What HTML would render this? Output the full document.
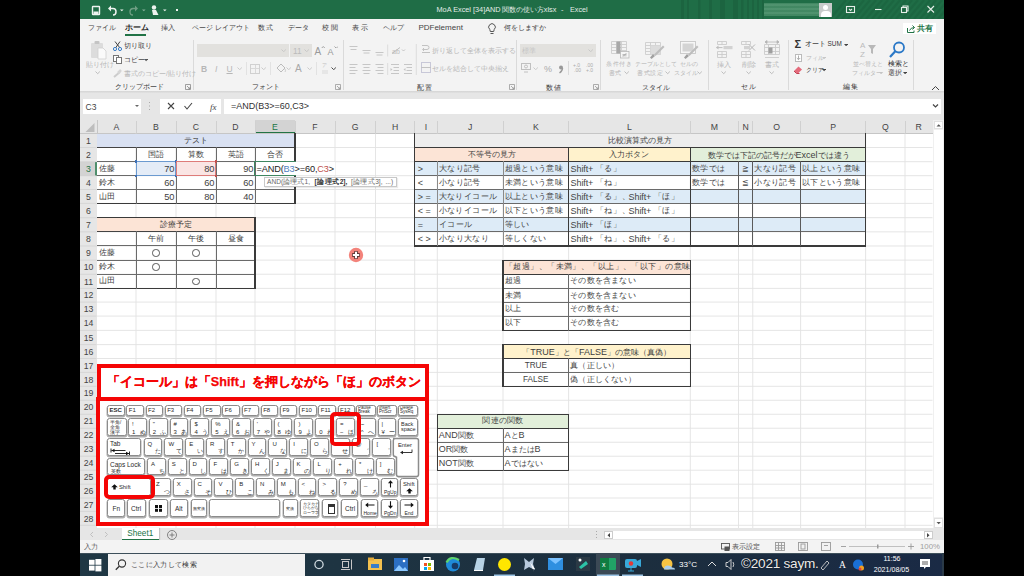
<!DOCTYPE html>
<html><head><meta charset="utf-8"><style>
html,body{margin:0;padding:0}
body{width:1024px;height:576px;position:relative;overflow:hidden;background:#000;font-family:"Liberation Sans",sans-serif}
div{position:absolute;box-sizing:border-box}
.t{white-space:nowrap}
.j{text-align:justify;text-align-last:justify;white-space:nowrap}
.k{background:#fff;border:1.5px solid #8c8c8c;border-radius:2.5px;box-shadow:0 1px 0 0.5px #b0b0b0;font-size:6px;color:#2a2a2a;overflow:hidden}
.k span{position:absolute;white-space:nowrap;line-height:6px}
</style></head><body>
<div style="left:80.00px;top:0.00px;width:864.00px;height:19.00px;background:#1f6d46"></div>
<svg style="position:absolute;left:680px;top:0" width="264" height="19"><g fill="#1a5e3c" opacity="0.55"><rect x="1" y="0" width="3" height="19"/><rect x="7" y="0" width="2" height="19"/><rect x="18" y="0" width="2.5" height="19"/><rect x="29" y="0" width="3" height="19"/><rect x="40" y="0" width="5" height="19"/><rect x="53" y="0" width="5" height="19"/><rect x="61" y="0" width="2.5" height="19"/><rect x="67" y="0" width="2" height="19"/><rect x="72" y="0" width="2" height="19"/><rect x="77" y="0" width="2" height="19"/><rect x="82" y="0" width="2" height="19"/></g><g stroke="#1a603d" stroke-width="2" opacity="0.5"><line x1="150" y1="19" x2="166" y2="0"/><line x1="156" y1="19" x2="172" y2="0"/><line x1="162" y1="19" x2="178" y2="0"/><line x1="168" y1="19" x2="184" y2="0"/><line x1="174" y1="19" x2="190" y2="0"/><line x1="180" y1="19" x2="196" y2="0"/><line x1="186" y1="19" x2="202" y2="0"/><line x1="192" y1="19" x2="208" y2="0"/><line x1="198" y1="19" x2="214" y2="0"/><line x1="204" y1="19" x2="220" y2="0"/><line x1="210" y1="19" x2="226" y2="0"/><line x1="216" y1="19" x2="232" y2="0"/><line x1="222" y1="19" x2="238" y2="0"/><line x1="228" y1="19" x2="244" y2="0"/><line x1="234" y1="19" x2="250" y2="0"/><line x1="240" y1="19" x2="256" y2="0"/><line x1="246" y1="19" x2="262" y2="0"/><line x1="252" y1="19" x2="268" y2="0"/><line x1="258" y1="19" x2="274" y2="0"/><line x1="264" y1="19" x2="280" y2="0"/></g></svg>
<svg style="position:absolute;left:88px;top:3px" width="100" height="14">
<g fill="none" stroke="#eef3ef" stroke-width="1.4">
<rect x="4.5" y="3.5" width="7" height="8" rx="0.5"/></g><rect x="5.5" y="8.5" width="5" height="3" fill="#eef3ef"/>
<g fill="none" stroke="#eef3ef" stroke-width="1.5"><path d="M22 5.5 h3 q3 0 3 3.2 q0 3.3 -3 3.3"/></g><path d="M20 5.5 l3 -3 v6z" fill="#eef3ef"/>
<g fill="none" stroke="#6f9e83" stroke-width="1.3"><path d="M48 5.5 h-3 q-3 0 -3 3.2 q0 3.3 3 3.3"/></g><path d="M50 5.5 l-3 -3 v6z" fill="#6f9e83"/>
<g fill="#eef3ef"><path d="M32 6.5 l1.8 1.8 l1.8 -1.8z"/><path d="M54 6.5 l1.8 1.8 l1.8 -1.8z" opacity=".5"/>
<circle cx="66" cy="4.5" r="2.2"/><path d="M64 7 h4 l2.5 5 h-5.5z"/><path d="M75 6.5 l1.8 1.8 l1.8 -1.8z"/><rect x="88" y="6" width="2" height="2"/></g>
</svg>
<div class="t" style="left:436.50px;top:-0.50px;line-height:20px;font-size:7.3px;color:#e4ece7;">MoA Excel [34]AND</div>
<div class="t j" style="left:501.50px;width:40.00px;top:-0.50px;line-height:20px;font-size:6.6px;color:#e4ece7;">関数の使い方</div>
<div class="t" style="left:541.80px;top:-0.50px;line-height:20px;font-size:7.3px;color:#e4ece7;">.xlsx</div>
<div class="t" style="left:561.00px;top:-0.50px;line-height:20px;font-size:7.3px;color:#e4ece7;">-</div>
<div class="t" style="left:570.00px;top:-0.50px;line-height:20px;font-size:7.2px;color:#e4ece7;">Excel</div>
<div style="left:764.00px;top:3.00px;width:55.00px;height:13.00px;background:repeating-linear-gradient(180deg,#3f8660 0px,#5c9c79 2px,#3f8660 4px);opacity:.9"></div>
<div style="left:819.00px;top:3.00px;width:13.00px;height:13.50px;background:#c9cccb;overflow:hidden"><div style="left:4px;top:2px;width:5px;height:5px;border-radius:50%;background:#fff"></div><div style="left:1.5px;top:8px;width:10px;height:7px;border-radius:4px 4px 0 0;background:#fff"></div></div>
<svg style="position:absolute;left:840px;top:0" width="104" height="19"><g fill="none" stroke="#e6eee9" stroke-width="1.1">
<rect x="6.5" y="6.5" width="8" height="6"/><path d="M9 9 l1.5 1.5 l1.5 -1.5"/>
<line x1="35" y1="9.5" x2="41.5" y2="9.5"/>
<rect x="61.5" y="7.5" width="5" height="5"/><path d="M63 7.5 v-1.5 h5 v5 h-1.5"/>
<path d="M87.5 6 l6.5 6.5 M94 6 l-6.5 6.5"/></g></svg>
<div style="left:80.00px;top:19.00px;width:864.00px;height:73.00px;background:#f3f3f3"></div>
<div class="t j" style="left:88.00px;width:21.00px;top:18.30px;line-height:20px;font-size:7.3px;color:#444;">ファイル</div>
<div class="t j" style="left:160.70px;width:14.30px;top:18.30px;line-height:20px;font-size:7.3px;color:#444;">挿入</div>
<div class="t j" style="left:191.70px;width:50.00px;top:18.30px;line-height:20px;font-size:7.3px;color:#444;">ページ レイアウト</div>
<div class="t j" style="left:257.70px;width:15.30px;top:18.30px;line-height:20px;font-size:7.3px;color:#444;">数式</div>
<div class="t j" style="left:288.00px;width:19.00px;top:18.30px;line-height:20px;font-size:7.3px;color:#444;">データ</div>
<div class="t j" style="left:322.00px;width:15.50px;top:18.30px;line-height:20px;font-size:7.3px;color:#444;">校閲</div>
<div class="t j" style="left:352.00px;width:16.00px;top:18.30px;line-height:20px;font-size:7.3px;color:#444;">表示</div>
<div class="t j" style="left:382.50px;width:18.50px;top:18.30px;line-height:20px;font-size:7.3px;color:#444;">ヘルプ</div>
<div class="t j" style="left:125.00px;width:20.40px;top:18.30px;line-height:20px;font-size:7.5px;color:#222;font-weight:bold">ホーム</div>
<div class="t" style="left:418.40px;top:18.30px;line-height:20px;font-size:8px;color:#444;">PDFelement</div>
<div style="left:125.00px;top:34.00px;width:21.00px;height:2.00px;background:#217346"></div>
<svg style="position:absolute;left:486px;top:22px" width="12" height="13"><g fill="none" stroke="#555" stroke-width="1"><path d="M3.8 7.5 a3.3 3.3 0 1 1 4.4 0 l-.5 2 h-3.4z"/><line x1="4.5" y1="11.5" x2="7.5" y2="11.5"/></g></svg>
<div class="t j" style="left:503.75px;width:37.25px;top:18.30px;line-height:20px;font-size:7.3px;color:#444;">何をしますか</div>
<div style="left:903.00px;top:23.00px;width:33.00px;height:11.00px;background:#fff"></div>
<svg style="position:absolute;left:906px;top:24px" width="10" height="10"><g fill="none" stroke="#217346" stroke-width="1"><path d="M1.5 4 v4.5 h6.5 v-2"/><path d="M3.5 6.5 q1 -3 5 -3 M6.5 1.5 l2 2 l-2 2"/></g></svg>
<div class="t j" style="left:917.00px;width:16.00px;top:18.50px;line-height:20px;font-size:7.5px;color:#217346;font-weight:bold">共有</div>
<div style="left:192.50px;top:40.00px;width:1.00px;height:50.00px;background:#dadada"></div>
<div style="left:342.50px;top:40.00px;width:1.00px;height:50.00px;background:#dadada"></div>
<div style="left:516.00px;top:40.00px;width:1.00px;height:50.00px;background:#dadada"></div>
<div style="left:600.00px;top:40.00px;width:1.00px;height:50.00px;background:#dadada"></div>
<div style="left:708.00px;top:40.00px;width:1.00px;height:50.00px;background:#dadada"></div>
<div style="left:788.00px;top:40.00px;width:1.00px;height:50.00px;background:#dadada"></div>
<div style="left:913.00px;top:40.00px;width:1.00px;height:50.00px;background:#dadada"></div>
<svg style="position:absolute;left:88px;top:40px" width="24" height="20">
<rect x="3" y="3" width="12" height="15" rx="1" fill="#dcdcdc"/><rect x="6.5" y="1" width="5" height="3" rx="1" fill="#c4c4c4"/>
<path d="M10 8 h5 l3 3 v8 h-8z" fill="#fafafa" stroke="#cfcfcf" stroke-width=".8"/></svg>
<div class="t j" style="left:86.00px;width:23.00px;top:54.70px;line-height:20px;font-size:6.5px;color:#b7b7b7;">貼り付け</div>
<svg style="position:absolute;left:95.30px;top:71.40px" width="5.4" height="3.2"><path d="M0.5 0.5 L2.7 2.7 L4.9 0.5" fill="none" stroke="#b7b7b7" stroke-width="0.9"/></svg>
<svg style="position:absolute;left:112px;top:40px" width="12" height="40"><g fill="none" stroke-width="1">
<path d="M3 1.5 l5 6.5 M8 1.5 l-4.5 6.5" stroke="#444"/><circle cx="3" cy="9" r="1.6" stroke="#3b7ec6"/><circle cx="8" cy="9" r="1.6" stroke="#3b7ec6"/>
<rect x="1.5" y="15.5" width="5" height="6" stroke="#777" fill="#fff"/><rect x="4.5" y="17.5" width="5" height="6" stroke="#777" fill="#fff"/>
<path d="M2 37 l6 -5" stroke="#cccccc" stroke-width="2"/><path d="M6 33 l3 -3" stroke="#d5d5d5" stroke-width="2.5"/></g></svg>
<div class="t j" style="left:124.00px;width:21.60px;top:36.00px;line-height:20px;font-size:6.5px;color:#3c3c3c;">切り取り</div>
<div class="t j" style="left:124.00px;width:15.00px;top:50.00px;line-height:20px;font-size:6.5px;color:#3c3c3c;">コピー</div>
<svg style="position:absolute;left:143.90px;top:59.34px" width="4.2" height="2.3"><path d="M0 0 L2.1 2.3100000000000005 L4.2 0z" fill="#555"/></svg>
<div class="t j" style="left:124.00px;width:60.60px;top:64.00px;line-height:20px;font-size:6.5px;color:#b7b7b7;">書式のコピー/貼り付け</div>
<div class="t j" style="left:114.60px;width:34.00px;top:77.00px;line-height:20px;font-size:7px;color:#3a3a3a;">クリップボード</div>
<svg style="position:absolute;left:185px;top:84px" width="6" height="6"><path d="M.5 .5 h5 v5 h-5z M2 2 l3 3 M3 5 h2 v-2" fill="none" stroke="#888" stroke-width=".8"/></svg>
<div style="left:197.00px;top:44.00px;width:92.00px;height:13.00px;background:#e2e1de"></div>
<div style="left:290.00px;top:44.00px;width:22.00px;height:13.00px;background:#e2e1de"></div>
<div class="t" style="left:293.00px;top:40.50px;line-height:20px;font-size:8.3px;color:#bbbbbb;">11</div>
<svg style="position:absolute;left:281.30px;top:48.90px" width="5.4" height="3.2"><path d="M0.5 0.5 L2.7 2.7 L4.9 0.5" fill="none" stroke="#c4c4c4" stroke-width="0.9"/></svg>
<svg style="position:absolute;left:304.30px;top:48.90px" width="5.4" height="3.2"><path d="M0.5 0.5 L2.7 2.7 L4.9 0.5" fill="none" stroke="#c4c4c4" stroke-width="0.9"/></svg>
<div class="t" style="left:314.50px;top:41.50px;line-height:20px;font-size:10px;color:#999;">A</div>
<svg style="position:absolute;left:320.75px;top:45.62px" width="4.5" height="2.8"><path d="M0.5 2.25 L2.25 0.5 L4.0 2.25" fill="none" stroke="#999" stroke-width="0.9"/></svg>
<div class="t" style="left:327.50px;top:42.00px;line-height:20px;font-size:9px;color:#999;">A</div>
<svg style="position:absolute;left:333.75px;top:45.62px" width="4.5" height="2.8"><path d="M0.5 0.5 L2.25 2.25 L4.0 0.5" fill="none" stroke="#999" stroke-width="0.9"/></svg>
<div class="t" style="left:201.00px;top:58.50px;line-height:20px;font-size:8.5px;color:#b7b7b7;font-weight:bold">B</div>
<div class="t" style="left:215.00px;top:58.50px;line-height:20px;font-size:8.5px;color:#b7b7b7;font-style:italic">I</div>
<div class="t" style="left:226.50px;top:58.50px;line-height:20px;font-size:8.5px;color:#b7b7b7;text-decoration:underline">U</div>
<svg style="position:absolute;left:236.80px;top:66.90px" width="5.4" height="3.2"><path d="M0.5 0.5 L2.7 2.7 L4.9 0.5" fill="none" stroke="#c4c4c4" stroke-width="0.9"/></svg>
<div style="left:246.00px;top:62.00px;width:1.00px;height:13.00px;background:#e2e2e2"></div>
<div style="left:250.00px;top:63.50px;width:10.00px;height:10.00px;border:1px solid #d0d0d0;background:linear-gradient(#d8d8d8,#d8d8d8) center/1px 100% no-repeat,linear-gradient(#d8d8d8,#d8d8d8) center/100% 1px no-repeat"></div>
<svg style="position:absolute;left:261.30px;top:66.90px" width="5.4" height="3.2"><path d="M0.5 0.5 L2.7 2.7 L4.9 0.5" fill="none" stroke="#c4c4c4" stroke-width="0.9"/></svg>
<div style="left:270.00px;top:62.00px;width:1.00px;height:13.00px;background:#e2e2e2"></div>
<svg style="position:absolute;left:275px;top:63px" width="12" height="11"><path d="M2 5 l4 -4 l4 4 l-4 4z" fill="none" stroke="#bbb"/><path d="M10 6 q1 2 0 3" stroke="#ccc" fill="none"/></svg>
<svg style="position:absolute;left:285.80px;top:66.90px" width="5.4" height="3.2"><path d="M0.5 0.5 L2.7 2.7 L4.9 0.5" fill="none" stroke="#c4c4c4" stroke-width="0.9"/></svg>
<div class="t" style="left:295.00px;top:58.50px;line-height:20px;font-size:10px;color:#a8a8a8;">A</div>
<svg style="position:absolute;left:306.80px;top:66.90px" width="5.4" height="3.2"><path d="M0.5 0.5 L2.7 2.7 L4.9 0.5" fill="none" stroke="#c4c4c4" stroke-width="0.9"/></svg>
<div style="left:316.00px;top:62.00px;width:1.00px;height:13.00px;background:#e2e2e2"></div>
<div class="t" style="left:322.00px;top:56.00px;line-height:20px;font-size:4.5px;color:#c2c2c2;">ア</div>
<div style="left:322.00px;top:70.00px;width:6.00px;height:4.00px;background:#e6e6e6"></div>
<svg style="position:absolute;left:330.80px;top:66.90px" width="5.4" height="3.2"><path d="M0.5 0.5 L2.7 2.7 L4.9 0.5" fill="none" stroke="#333" stroke-width="0.9"/></svg>
<div class="t j" style="left:251.50px;width:21.50px;top:77.00px;line-height:20px;font-size:7px;color:#3a3a3a;">フォント</div>
<svg style="position:absolute;left:335px;top:84px" width="6" height="6"><path d="M.5 .5 h5 v5 h-5z M2 2 l3 3 M3 5 h2 v-2" fill="none" stroke="#999" stroke-width=".8"/></svg>
<svg style="position:absolute;left:346px;top:44px" width="90" height="34"><g stroke="#c6c6c6" stroke-width="1">
<path d="M3.5 2.5h8M4.5 5.5h6 M16.5 6.5h8M17.5 9h6 M29.5 8.5h8M30.5 11h6"/>
<path d="M3.5 20.5h8M3.5 23.5h6M3.5 26.5h8M3.5 29.5h6 M16.5 20.5h8M17.5 23.5h6M16.5 26.5h8M17.5 29.5h6 M29.5 20.5h8M31.5 23.5h6M29.5 26.5h8M31.5 29.5h6"/>
<path d="M45 20.5h8M47.5 23.5h5.5M47.5 26.5h5.5M45 29.5h8 M58 20.5h8M60.5 23.5h5.5M60.5 26.5h5.5M58 29.5h8"/>
<path d="M44.5 24 l2 1.5 l-2 1.5z M57.5 25.5 l2 -1.5 v3z" fill="#c6c6c6" stroke="none"/>
</g><g stroke="#dcdcdc"><line x1="41.7" y1="0.5" x2="41.7" y2="12.5"/><line x1="41.7" y1="19" x2="41.7" y2="31"/><line x1="70.3" y1="0" x2="70.3" y2="31"/></g>
<path d="M46 9.5 l8 -6" stroke="#bdbdbd"/><text x="46" y="10" font-size="7" fill="#bdbdbd" font-family="Liberation Sans">ab</text><path d="M56 5.5 l1.5 1.5 l1.5 -1.5" fill="none" stroke="#bdbdbd" stroke-width=".9"/></svg>
<svg style="position:absolute;left:420px;top:43px" width="12" height="34"><g fill="none" stroke="#c2c2c2" stroke-width="1">
<path d="M2 2.5 h5 a2 2 0 0 1 0 4 h-4 M2 9.5 h8 M4 5 l-1.5 1.5 l1.5 1.5"/><rect x="1.5" y="19.5" width="9" height="10" stroke="#c8c8d8"/><line x1="1" y1="24.5" x2="11" y2="24.5"/></g></svg>
<div class="t j" style="left:432.00px;width:72.50px;top:40.60px;line-height:20px;font-size:6.5px;color:#b7b7b7;">折り返して全体を表示する</div>
<div class="t j" style="left:432.00px;width:62.00px;top:58.70px;line-height:20px;font-size:6.5px;color:#b7b7b7;">セルを結合して中央揃え</div>
<svg style="position:absolute;left:502.30px;top:67.10px" width="5.4" height="3.2"><path d="M0.5 0.5 L2.7 2.7 L4.9 0.5" fill="none" stroke="#c4c4c4" stroke-width="0.9"/></svg>
<div class="t j" style="left:416.50px;width:15.00px;top:77.60px;line-height:20px;font-size:7.2px;color:#3a3a3a;">配置</div>
<svg style="position:absolute;left:509px;top:84px" width="6" height="6"><path d="M.5 .5 h5 v5 h-5z M2 2 l3 3 M3 5 h2 v-2" fill="none" stroke="#999" stroke-width=".8"/></svg>
<div style="left:520.00px;top:44.00px;width:76.00px;height:13.00px;background:#e2e1de"></div>
<div class="t j" style="left:522.00px;width:13.00px;top:40.50px;line-height:20px;font-size:6.5px;color:#c4c4c4;">標準</div>
<svg style="position:absolute;left:588.30px;top:48.90px" width="5.4" height="3.2"><path d="M0.5 0.5 L2.7 2.7 L4.9 0.5" fill="none" stroke="#c4c4c4" stroke-width="0.9"/></svg>
<svg style="position:absolute;left:520px;top:61px" width="80" height="15"><g fill="none" stroke="#c0c0c0" stroke-width="1">
<rect x="1.5" y="2.5" width="9" height="6"/><line x1="4" y1="11" x2="8" y2="11"/><circle cx="6" cy="5.5" r="1.5"/></g>
<line x1="48.5" y1="0" x2="48.5" y2="14" stroke="#dadada"/></svg>
<svg style="position:absolute;left:533.30px;top:66.90px" width="5.4" height="3.2"><path d="M0.5 0.5 L2.7 2.7 L4.9 0.5" fill="none" stroke="#c4c4c4" stroke-width="0.9"/></svg>
<div class="t" style="left:544.00px;top:58.50px;line-height:20px;font-size:9px;color:#aaa;">%</div>
<svg style="position:absolute;left:557px;top:64px" width="8" height="10"><circle cx="4" cy="3.5" r="2" fill="#999"/><path d="M5.5 4 q0 3 -3 5" stroke="#999" stroke-width="1.4" fill="none"/></svg>
<svg style="position:absolute;left:572px;top:62px" width="26" height="12"><g font-family="Liberation Sans" font-size="5" fill="#aaa"><text x="1" y="5">+.0</text><text x="2" y="10">.00</text><text x="14" y="5">.00</text><text x="14" y="10">+.0</text></g></svg>
<div class="t j" style="left:545.50px;width:15.00px;top:77.60px;line-height:20px;font-size:7.2px;color:#3a3a3a;">数値</div>
<svg style="position:absolute;left:593px;top:84px" width="6" height="6"><path d="M.5 .5 h5 v5 h-5z M2 2 l3 3 M3 5 h2 v-2" fill="none" stroke="#999" stroke-width=".8"/></svg>
<svg style="position:absolute;left:600px;top:36px" width="110" height="24">
<g fill="none" stroke="#cdcdcd" stroke-width="0.9"><path d="M11.5 5.5h15v12h-15z M11.5 8.5h15 M11.5 11.5h15 M11.5 14.5h15 M16.5 5.5v12 M21.5 5.5v12"/></g>
<rect x="16.5" y="5.5" width="4" height="12" fill="#a8a8a8"/><rect x="20.5" y="15.5" width="8.5" height="6.5" fill="#f6f6f6" stroke="#b8b8b8" stroke-width="0.8"/><path d="M23 20.5 l3.5 -3.5 M22.5 18.5 h4 M22.5 19.8 h4" stroke="#999" stroke-width="0.6"/>
<g fill="none" stroke="#cdcdcd" stroke-width="0.9"><path d="M45.5 6.5h15v12h-15z M45.5 9.5h15 M45.5 12.5h15 M45.5 15.5h15 M50.5 6.5v12 M55.5 6.5v12"/></g><rect x="50.5" y="9.5" width="10" height="9" fill="#dcdcdc"/>
<path d="M50 21.5 l3 -3.5 l2 2 l-3.5 3z" fill="#a0a0a0"/><path d="M54 18.5 l9 -9 l1.5 1.5 l-9 9z" fill="#bdbdbd"/>
<rect x="80.5" y="5.5" width="15" height="12" fill="#f6f6f6" stroke="#c8c8c8" stroke-width="0.9"/><rect x="82.5" y="7.5" width="11" height="8" fill="#d4d4d4"/>
<path d="M84 21.5 l3 -3.5 l2 2 l-3.5 3z" fill="#a0a0a0"/><path d="M88 18.5 l9 -9 l1.5 1.5 l-9 9z" fill="#bdbdbd"/></svg>
<div class="t j" style="left:606.00px;width:26.00px;top:54.00px;line-height:20px;font-size:6.3px;color:#b7b7b7;">条件付き</div>
<div class="t j" style="left:609.00px;width:12.00px;top:63.00px;line-height:20px;font-size:6.3px;color:#b7b7b7;">書式</div>
<svg style="position:absolute;left:623.80px;top:71.40px" width="5.4" height="3.2"><path d="M0.5 0.5 L2.7 2.7 L4.9 0.5" fill="none" stroke="#b7b7b7" stroke-width="0.9"/></svg>
<div class="t j" style="left:635.00px;width:36.00px;top:54.00px;line-height:20px;font-size:6.3px;color:#b7b7b7;">テーブルとして</div>
<div class="t j" style="left:637.00px;width:26.00px;top:63.00px;line-height:20px;font-size:6.3px;color:#b7b7b7;">書式設定</div>
<svg style="position:absolute;left:665.30px;top:71.40px" width="5.4" height="3.2"><path d="M0.5 0.5 L2.7 2.7 L4.9 0.5" fill="none" stroke="#b7b7b7" stroke-width="0.9"/></svg>
<div class="t j" style="left:680.00px;width:17.00px;top:54.00px;line-height:20px;font-size:6.3px;color:#b7b7b7;">セルの</div>
<div class="t j" style="left:674.00px;width:20.00px;top:63.00px;line-height:20px;font-size:6.3px;color:#b7b7b7;">スタイル</div>
<svg style="position:absolute;left:696.80px;top:71.40px" width="5.4" height="3.2"><path d="M0.5 0.5 L2.7 2.7 L4.9 0.5" fill="none" stroke="#b7b7b7" stroke-width="0.9"/></svg>
<div class="t j" style="left:642.00px;width:22.00px;top:77.60px;line-height:20px;font-size:7px;color:#3a3a3a;">スタイル</div>
<svg style="position:absolute;left:708px;top:36px" width="80" height="24">
<g fill="none" stroke="#cbcbcb" stroke-width="0.9">
<path d="M9.5 5.5h9v3h-9z M14 5.5v3 M9.5 15.5h9v6h-9z M9.5 18.5h9 M14 15.5v6"/>
<path d="M33.5 5.5h9v3h-9z M38 5.5v3 M33.5 15.5h9v6h-9z M33.5 18.5h9 M38 15.5v6"/>
<path d="M56.5 8.5h15v10h-15z M56.5 11.5h15 M56.5 15.5h15 M60.5 8.5v10 M67.5 8.5v10 M57 21.5 h14"/>
</g>
<rect x="15.5" y="10" width="9" height="3.2" fill="#d2d2d2"/><path d="M8.5 11.6 h6" stroke="#bdbdbd" stroke-width="1"/><path d="M8 11.6 l2.5 -2 v4z" fill="#bdbdbd"/>
<rect x="36" y="10" width="6" height="3.2" fill="#d2d2d2"/><path d="M41 8.5 l6 6 M47 8.5 l-6 6" stroke="#b5b5b5" stroke-width="1"/>
<rect x="60.5" y="11.5" width="4" height="6" fill="#9e9e9e"/><path d="M57 6 h14 M57 6 l2 -1.5 v3z M71 6 l-2 -1.5 v3z" stroke="#b5b5b5" stroke-width="0.8" fill="#b5b5b5"/>
</svg>
<div class="t j" style="left:717.00px;width:14.00px;top:54.50px;line-height:20px;font-size:6.8px;color:#b7b7b7;">挿入</div>
<svg style="position:absolute;left:721.30px;top:71.40px" width="5.4" height="3.2"><path d="M0.5 0.5 L2.7 2.7 L4.9 0.5" fill="none" stroke="#b7b7b7" stroke-width="0.9"/></svg>
<div class="t j" style="left:742.00px;width:14.00px;top:54.50px;line-height:20px;font-size:6.8px;color:#b7b7b7;">削除</div>
<svg style="position:absolute;left:746.30px;top:71.40px" width="5.4" height="3.2"><path d="M0.5 0.5 L2.7 2.7 L4.9 0.5" fill="none" stroke="#b7b7b7" stroke-width="0.9"/></svg>
<div class="t j" style="left:765.00px;width:14.00px;top:54.50px;line-height:20px;font-size:6.8px;color:#b7b7b7;">書式</div>
<svg style="position:absolute;left:769.30px;top:71.40px" width="5.4" height="3.2"><path d="M0.5 0.5 L2.7 2.7 L4.9 0.5" fill="none" stroke="#b7b7b7" stroke-width="0.9"/></svg>
<div class="t j" style="left:740.50px;width:15.00px;top:77.00px;line-height:20px;font-size:7.2px;color:#3a3a3a;">セル</div>
<div class="t" style="left:794.50px;top:34.20px;line-height:20px;font-size:11px;color:#333;font-weight:bold">Σ</div>
<div class="t j" style="left:805.00px;width:21.00px;top:34.20px;line-height:20px;font-size:6.5px;color:#333;">オート</div>
<div class="t" style="left:827.50px;top:34.20px;line-height:20px;font-size:6.4px;color:#333;">SUM</div>
<svg style="position:absolute;left:843.70px;top:43.74px" width="4.2" height="2.3"><path d="M0 0 L2.1 2.3100000000000005 L4.2 0z" fill="#444"/></svg>
<div style="left:795.00px;top:54.00px;width:7.00px;height:8.00px;border:1px solid #bbb;background:#fff"></div>
<svg style="position:absolute;left:795px;top:54px" width="7" height="8"><path d="M3.5 1.5 v4 M1.8 4 l1.7 1.7 l1.7 -1.7" fill="none" stroke="#999" stroke-width=".8"/></svg>
<div class="t j" style="left:806.00px;width:13.00px;top:48.00px;line-height:20px;font-size:6.3px;color:#b7b7b7;">フィル</div>
<svg style="position:absolute;left:821.60px;top:57.14px" width="4.2" height="2.3"><path d="M0 0 L2.1 2.3100000000000005 L4.2 0z" fill="#c8c8c8"/></svg>
<svg style="position:absolute;left:793px;top:65px" width="10" height="10"><path d="M1 6 l4.5 -4.5 l3.5 3 l-4.5 4.5z" fill="#e46a7b"/><path d="M1 6 l2.5 2.5 h3" stroke="#c04052" fill="none"/></svg>
<div class="t j" style="left:806.00px;width:13.00px;top:60.40px;line-height:20px;font-size:6.3px;color:#333;">クリア</div>
<svg style="position:absolute;left:821.60px;top:69.44px" width="4.2" height="2.3"><path d="M0 0 L2.1 2.3100000000000005 L4.2 0z" fill="#444"/></svg>
<svg style="position:absolute;left:858px;top:40px" width="50" height="20"><g font-family="Liberation Sans" font-size="8" fill="#bbb"><text x="2" y="8">A</text><text x="2" y="17">Z</text></g>
<path d="M10 5 h8 l-3 4 v5 l-2 -1 v-4z" fill="#b8b8b8"/>
<circle cx="41" cy="7.5" r="5" fill="none" stroke="#2a78c7" stroke-width="1.8"/><line x1="37.3" y1="11.3" x2="32" y2="17" stroke="#2a78c7" stroke-width="2.2"/></svg>
<div class="t j" style="left:853.00px;width:29.70px;top:54.00px;line-height:20px;font-size:6.3px;color:#b7b7b7;">並べ替えと</div>
<div class="t j" style="left:852.00px;width:25.00px;top:63.00px;line-height:20px;font-size:6.3px;color:#b7b7b7;">フィルター</div>
<svg style="position:absolute;left:879.40px;top:72.14px" width="4.2" height="2.3"><path d="M0 0 L2.1 2.3100000000000005 L4.2 0z" fill="#c4c4c4"/></svg>
<div class="t j" style="left:888.00px;width:18.00px;top:54.00px;line-height:20px;font-size:6.5px;color:#333;">検索と</div>
<div class="t j" style="left:888.00px;width:12.00px;top:63.00px;line-height:20px;font-size:6.5px;color:#333;">選択</div>
<svg style="position:absolute;left:902.70px;top:72.14px" width="4.2" height="2.3"><path d="M0 0 L2.1 2.3100000000000005 L4.2 0z" fill="#444"/></svg>
<div class="t j" style="left:842.50px;width:15.00px;top:77.00px;line-height:20px;font-size:7.2px;color:#3a3a3a;">編集</div>
<svg style="position:absolute;left:931px;top:85px" width="9" height="6"><path d="M1 5 l3.5 -3.5 l3.5 3.5" fill="none" stroke="#444" stroke-width="1"/></svg>
<div style="left:80.00px;top:91.00px;width:864.00px;height:2.00px;background:linear-gradient(#d4d4d4,#e2e2e2)"></div>
<div style="left:80.00px;top:93.00px;width:864.00px;height:27.00px;background:#e6e6e6"></div>
<div style="left:83.00px;top:99.00px;width:58.00px;height:14.50px;background:#fff"></div>
<div class="t" style="left:85.50px;top:96.50px;line-height:20px;font-size:8.5px;color:#444;">C3</div>
<svg style="position:absolute;left:134px;top:104px" width="6" height="4"><path d="M1 1 l2 2 l2 -2z" fill="#666"/></svg>
<svg style="position:absolute;left:148px;top:101px" width="4" height="10"><g fill="#aaa"><rect x="1" y="1" width="1" height="1"/><rect x="1" y="4.5" width="1" height="1"/><rect x="1" y="8" width="1" height="1"/></g></svg>
<div style="left:160.00px;top:99.00px;width:61.00px;height:14.50px;background:#fff"></div>
<svg style="position:absolute;left:160px;top:99px" width="61" height="14"><g stroke="#444" stroke-width="1.1" fill="none"><path d="M8 4 l6 6 M14 4 l-6 6"/><path d="M24.5 7 l2.5 3 l5 -6"/></g></svg>
<div class="t" style="left:210.00px;top:96.50px;line-height:20px;font-size:9px;color:#444;font-style:italic;font-family:'Liberation Serif'">fx</div>
<div style="left:224.00px;top:99.00px;width:717.00px;height:14.50px;background:#fff"></div>
<div class="t" style="left:231.00px;top:96.20px;line-height:20px;font-size:9px;color:#333;">=AND(B3&gt;=60,C3&gt;</div>
<svg style="position:absolute;left:932px;top:103px" width="7" height="6"><path d="M1 1.5 l2.5 2.5 l2.5 -2.5" fill="none" stroke="#444" stroke-width="1.2"/></svg>
<div style="left:80.00px;top:120.00px;width:853.00px;height:13.60px;background:#e6e6e6"></div>
<div style="left:80.00px;top:133.60px;width:17.00px;height:395.00px;background:#e6e6e6"></div>
<div style="left:255.00px;top:120.00px;width:40.00px;height:13.60px;background:#d3d3d3"></div>
<div style="left:255.00px;top:131.80px;width:40.00px;height:1.80px;background:#217346"></div>
<div style="left:80.00px;top:161.60px;width:17.00px;height:14.00px;background:#d3d3d3"></div>
<div style="left:95.20px;top:161.60px;width:1.80px;height:14.00px;background:#4f8f6c"></div>
<svg style="position:absolute;left:84px;top:122px" width="12" height="11"><path d="M10.5 1 v9 h-9z" fill="#bdbdbd"/></svg>
<div class="t" style="left:-33.50px;width:300px;text-align:center;top:117.00px;line-height:20px;font-size:8.7px;color:#444;">A</div>
<div style="left:135.50px;top:121.00px;width:1.00px;height:12.40px;background:#d0d0d0"></div>
<div class="t" style="left:6.00px;width:300px;text-align:center;top:117.00px;line-height:20px;font-size:8.7px;color:#444;">B</div>
<div style="left:175.50px;top:121.00px;width:1.00px;height:12.40px;background:#d0d0d0"></div>
<div class="t" style="left:46.00px;width:300px;text-align:center;top:117.00px;line-height:20px;font-size:8.7px;color:#444;">C</div>
<div style="left:215.50px;top:121.00px;width:1.00px;height:12.40px;background:#d0d0d0"></div>
<div class="t" style="left:85.50px;width:300px;text-align:center;top:117.00px;line-height:20px;font-size:8.7px;color:#444;">D</div>
<div style="left:254.50px;top:121.00px;width:1.00px;height:12.40px;background:#d0d0d0"></div>
<div class="t" style="left:125.00px;width:300px;text-align:center;top:117.00px;line-height:20px;font-size:8.7px;color:#217346;">E</div>
<div style="left:294.50px;top:121.00px;width:1.00px;height:12.40px;background:#d0d0d0"></div>
<div class="t" style="left:165.00px;width:300px;text-align:center;top:117.00px;line-height:20px;font-size:8.7px;color:#444;">F</div>
<div style="left:334.50px;top:121.00px;width:1.00px;height:12.40px;background:#d0d0d0"></div>
<div class="t" style="left:205.25px;width:300px;text-align:center;top:117.00px;line-height:20px;font-size:8.7px;color:#444;">G</div>
<div style="left:375.00px;top:121.00px;width:1.00px;height:12.40px;background:#d0d0d0"></div>
<div class="t" style="left:245.10px;width:300px;text-align:center;top:117.00px;line-height:20px;font-size:8.7px;color:#444;">H</div>
<div style="left:414.20px;top:121.00px;width:1.00px;height:12.40px;background:#d0d0d0"></div>
<div class="t" style="left:276.00px;width:300px;text-align:center;top:117.00px;line-height:20px;font-size:8.7px;color:#444;">I</div>
<div style="left:436.80px;top:121.00px;width:1.00px;height:12.40px;background:#d0d0d0"></div>
<div class="t" style="left:320.15px;width:300px;text-align:center;top:117.00px;line-height:20px;font-size:8.7px;color:#444;">J</div>
<div style="left:502.50px;top:121.00px;width:1.00px;height:12.40px;background:#d0d0d0"></div>
<div class="t" style="left:385.80px;width:300px;text-align:center;top:117.00px;line-height:20px;font-size:8.7px;color:#444;">K</div>
<div style="left:568.10px;top:121.00px;width:1.00px;height:12.40px;background:#d0d0d0"></div>
<div class="t" style="left:479.45px;width:300px;text-align:center;top:117.00px;line-height:20px;font-size:8.7px;color:#444;">L</div>
<div style="left:689.80px;top:121.00px;width:1.00px;height:12.40px;background:#d0d0d0"></div>
<div class="t" style="left:564.40px;width:300px;text-align:center;top:117.00px;line-height:20px;font-size:8.7px;color:#444;">M</div>
<div style="left:738.00px;top:121.00px;width:1.00px;height:12.40px;background:#d0d0d0"></div>
<div class="t" style="left:595.65px;width:300px;text-align:center;top:117.00px;line-height:20px;font-size:8.7px;color:#444;">N</div>
<div style="left:752.30px;top:121.00px;width:1.00px;height:12.40px;background:#d0d0d0"></div>
<div class="t" style="left:626.70px;width:300px;text-align:center;top:117.00px;line-height:20px;font-size:8.7px;color:#444;">O</div>
<div style="left:800.10px;top:121.00px;width:1.00px;height:12.40px;background:#d0d0d0"></div>
<div class="t" style="left:683.10px;width:300px;text-align:center;top:117.00px;line-height:20px;font-size:8.7px;color:#444;">P</div>
<div style="left:865.10px;top:121.00px;width:1.00px;height:12.40px;background:#d0d0d0"></div>
<div class="t" style="left:735.30px;width:300px;text-align:center;top:117.00px;line-height:20px;font-size:8.7px;color:#444;">Q</div>
<div style="left:904.50px;top:121.00px;width:1.00px;height:12.40px;background:#d0d0d0"></div>
<div class="t" style="left:768.75px;width:300px;text-align:center;top:117.00px;line-height:20px;font-size:8.7px;color:#444;">R</div>
<div class="t" style="left:-61.50px;width:300px;text-align:center;top:130.70px;line-height:20px;font-size:8.7px;color:#444;">1</div>
<div class="t" style="left:-61.50px;width:300px;text-align:center;top:144.80px;line-height:20px;font-size:8.7px;color:#444;">2</div>
<div class="t" style="left:-61.50px;width:300px;text-align:center;top:158.90px;line-height:20px;font-size:8.7px;color:#217346;">3</div>
<div class="t" style="left:-61.50px;width:300px;text-align:center;top:172.80px;line-height:20px;font-size:8.7px;color:#444;">4</div>
<div class="t" style="left:-61.50px;width:300px;text-align:center;top:186.65px;line-height:20px;font-size:8.7px;color:#444;">5</div>
<div class="t" style="left:-61.50px;width:300px;text-align:center;top:200.75px;line-height:20px;font-size:8.7px;color:#444;">6</div>
<div class="t" style="left:-61.50px;width:300px;text-align:center;top:214.97px;line-height:20px;font-size:8.7px;color:#444;">7</div>
<div class="t" style="left:-61.50px;width:300px;text-align:center;top:229.11px;line-height:20px;font-size:8.7px;color:#444;">8</div>
<div class="t" style="left:-61.50px;width:300px;text-align:center;top:243.25px;line-height:20px;font-size:8.7px;color:#444;">9</div>
<div class="t" style="left:-61.50px;width:300px;text-align:center;top:257.39px;line-height:20px;font-size:8.7px;color:#444;">10</div>
<div class="t" style="left:-61.50px;width:300px;text-align:center;top:271.53px;line-height:20px;font-size:8.7px;color:#444;">11</div>
<div class="t" style="left:-61.50px;width:300px;text-align:center;top:285.45px;line-height:20px;font-size:8.7px;color:#444;">12</div>
<div class="t" style="left:-61.50px;width:300px;text-align:center;top:299.30px;line-height:20px;font-size:8.7px;color:#444;">13</div>
<div class="t" style="left:-61.50px;width:300px;text-align:center;top:313.45px;line-height:20px;font-size:8.7px;color:#444;">14</div>
<div class="t" style="left:-61.50px;width:300px;text-align:center;top:327.70px;line-height:20px;font-size:8.7px;color:#444;">15</div>
<div class="t" style="left:-61.50px;width:300px;text-align:center;top:341.75px;line-height:20px;font-size:8.7px;color:#444;">16</div>
<div class="t" style="left:-61.50px;width:300px;text-align:center;top:355.65px;line-height:20px;font-size:8.7px;color:#444;">17</div>
<div class="t" style="left:-61.50px;width:300px;text-align:center;top:369.55px;line-height:20px;font-size:8.7px;color:#444;">18</div>
<div class="t" style="left:-61.50px;width:300px;text-align:center;top:383.49px;line-height:20px;font-size:8.7px;color:#444;">19</div>
<div class="t" style="left:-61.50px;width:300px;text-align:center;top:397.48px;line-height:20px;font-size:8.7px;color:#444;">20</div>
<div class="t" style="left:-61.50px;width:300px;text-align:center;top:411.46px;line-height:20px;font-size:8.7px;color:#444;">21</div>
<div class="t" style="left:-61.50px;width:300px;text-align:center;top:425.45px;line-height:20px;font-size:8.7px;color:#444;">22</div>
<div class="t" style="left:-61.50px;width:300px;text-align:center;top:439.44px;line-height:20px;font-size:8.7px;color:#444;">23</div>
<div class="t" style="left:-61.50px;width:300px;text-align:center;top:453.42px;line-height:20px;font-size:8.7px;color:#444;">24</div>
<div class="t" style="left:-61.50px;width:300px;text-align:center;top:467.41px;line-height:20px;font-size:8.7px;color:#444;">25</div>
<div class="t" style="left:-61.50px;width:300px;text-align:center;top:481.30px;line-height:20px;font-size:8.7px;color:#444;">26</div>
<div class="t" style="left:-61.50px;width:300px;text-align:center;top:494.90px;line-height:20px;font-size:8.7px;color:#444;">27</div>
<div class="t" style="left:-61.50px;width:300px;text-align:center;top:508.55px;line-height:20px;font-size:8.7px;color:#444;">28</div>
<div style="left:96.50px;top:120.00px;width:0.80px;height:408.00px;background:#c6c6c6"></div>
<div style="left:80.00px;top:133.00px;width:853.00px;height:0.80px;background:#c6c6c6"></div>
<div style="left:97.00px;top:133.60px;width:836.00px;height:395.00px;background:#fff"></div>
<svg style="position:absolute;left:0;top:0" width="1024" height="576"><g stroke="#e2e2e2" stroke-width="0.9"><line x1="136" y1="133.6" x2="136" y2="528.4"/><line x1="176" y1="133.6" x2="176" y2="528.4"/><line x1="216" y1="133.6" x2="216" y2="528.4"/><line x1="255" y1="133.6" x2="255" y2="528.4"/><line x1="295" y1="133.6" x2="295" y2="528.4"/><line x1="335" y1="133.6" x2="335" y2="528.4"/><line x1="375.5" y1="133.6" x2="375.5" y2="528.4"/><line x1="414.7" y1="133.6" x2="414.7" y2="528.4"/><line x1="437.3" y1="133.6" x2="437.3" y2="528.4"/><line x1="503" y1="133.6" x2="503" y2="528.4"/><line x1="568.6" y1="133.6" x2="568.6" y2="528.4"/><line x1="690.3" y1="133.6" x2="690.3" y2="528.4"/><line x1="738.5" y1="133.6" x2="738.5" y2="528.4"/><line x1="752.8" y1="133.6" x2="752.8" y2="528.4"/><line x1="800.6" y1="133.6" x2="800.6" y2="528.4"/><line x1="865.6" y1="133.6" x2="865.6" y2="528.4"/><line x1="905" y1="133.6" x2="905" y2="528.4"/><line x1="97" y1="147.5" x2="932.5" y2="147.5"/><line x1="97" y1="161.7" x2="932.5" y2="161.7"/><line x1="97" y1="175.7" x2="932.5" y2="175.7"/><line x1="97" y1="189.5" x2="932.5" y2="189.5"/><line x1="97" y1="203.4" x2="932.5" y2="203.4"/><line x1="97" y1="217.7" x2="932.5" y2="217.7"/><line x1="97" y1="231.83999999999997" x2="932.5" y2="231.83999999999997"/><line x1="97" y1="245.98" x2="932.5" y2="245.98"/><line x1="97" y1="260.12" x2="932.5" y2="260.12"/><line x1="97" y1="274.26" x2="932.5" y2="274.26"/><line x1="97" y1="288.4" x2="932.5" y2="288.4"/><line x1="97" y1="302.1" x2="932.5" y2="302.1"/><line x1="97" y1="316.1" x2="932.5" y2="316.1"/><line x1="97" y1="330.4" x2="932.5" y2="330.4"/><line x1="97" y1="344.6" x2="932.5" y2="344.6"/><line x1="97" y1="358.5" x2="932.5" y2="358.5"/><line x1="97" y1="372.4" x2="932.5" y2="372.4"/><line x1="97" y1="386.3" x2="932.5" y2="386.3"/><line x1="97" y1="400.2857142857143" x2="932.5" y2="400.2857142857143"/><line x1="97" y1="414.2714285714286" x2="932.5" y2="414.2714285714286"/><line x1="97" y1="428.25714285714287" x2="932.5" y2="428.25714285714287"/><line x1="97" y1="442.24285714285713" x2="932.5" y2="442.24285714285713"/><line x1="97" y1="456.2285714285714" x2="932.5" y2="456.2285714285714"/><line x1="97" y1="470.2142857142857" x2="932.5" y2="470.2142857142857"/><line x1="97" y1="484.2" x2="932.5" y2="484.2"/><line x1="97" y1="498.0" x2="932.5" y2="498.0"/><line x1="97" y1="511.4" x2="932.5" y2="511.4"/><line x1="97" y1="525.3" x2="932.5" y2="525.3"/></g></svg>
<svg style="position:absolute;left:0;top:0" width="1024" height="576"><g stroke="#d2d2d2" stroke-width="0.8"><line x1="80" y1="147.5" x2="96.5" y2="147.5"/><line x1="80" y1="161.7" x2="96.5" y2="161.7"/><line x1="80" y1="175.7" x2="96.5" y2="175.7"/><line x1="80" y1="189.5" x2="96.5" y2="189.5"/><line x1="80" y1="203.4" x2="96.5" y2="203.4"/><line x1="80" y1="217.7" x2="96.5" y2="217.7"/><line x1="80" y1="231.83999999999997" x2="96.5" y2="231.83999999999997"/><line x1="80" y1="245.98" x2="96.5" y2="245.98"/><line x1="80" y1="260.12" x2="96.5" y2="260.12"/><line x1="80" y1="274.26" x2="96.5" y2="274.26"/><line x1="80" y1="288.4" x2="96.5" y2="288.4"/><line x1="80" y1="302.1" x2="96.5" y2="302.1"/><line x1="80" y1="316.1" x2="96.5" y2="316.1"/><line x1="80" y1="330.4" x2="96.5" y2="330.4"/><line x1="80" y1="344.6" x2="96.5" y2="344.6"/><line x1="80" y1="358.5" x2="96.5" y2="358.5"/><line x1="80" y1="372.4" x2="96.5" y2="372.4"/><line x1="80" y1="386.3" x2="96.5" y2="386.3"/><line x1="80" y1="400.2857142857143" x2="96.5" y2="400.2857142857143"/><line x1="80" y1="414.2714285714286" x2="96.5" y2="414.2714285714286"/><line x1="80" y1="428.25714285714287" x2="96.5" y2="428.25714285714287"/><line x1="80" y1="442.24285714285713" x2="96.5" y2="442.24285714285713"/><line x1="80" y1="456.2285714285714" x2="96.5" y2="456.2285714285714"/><line x1="80" y1="470.2142857142857" x2="96.5" y2="470.2142857142857"/><line x1="80" y1="484.2" x2="96.5" y2="484.2"/><line x1="80" y1="498.0" x2="96.5" y2="498.0"/><line x1="80" y1="511.4" x2="96.5" y2="511.4"/><line x1="80" y1="525.3" x2="96.5" y2="525.3"/></g></svg>
<div style="left:932.50px;top:120.00px;width:11.50px;height:408.40px;background:#f0f0f0"></div>
<div style="left:933.50px;top:120.80px;width:9.50px;height:8.60px;background:#fff;border:0.8px solid #e0e0e0"></div>
<svg style="position:absolute;left:933.5px;top:120.8px" width="10" height="9"><path d="M2.5 5.5 l2.2 -2.2 l2.2 2.2z" fill="#555"/></svg>
<div style="left:933.50px;top:130.40px;width:9.50px;height:387.00px;background:#fff"></div>
<div style="left:933.50px;top:518.20px;width:9.50px;height:9.60px;background:#fff;border:0.8px solid #e0e0e0"></div>
<svg style="position:absolute;left:933.5px;top:518.2px" width="10" height="10"><path d="M2.5 4 l2.2 2.2 l2.2 -2.2z" fill="#555"/></svg>
<div style="left:97.00px;top:133.50px;width:198.00px;height:14.00px;background:#d9e1f2"></div>
<div style="left:136.00px;top:161.70px;width:40.00px;height:14.00px;background:#e4ecf7"></div>
<div style="left:176.00px;top:161.70px;width:40.00px;height:14.00px;background:#fae5e4"></div>
<div class="t j" style="left:184.00px;width:24.00px;top:130.70px;line-height:20px;font-size:8.2px;color:#3e3e3e;">テスト</div>
<div class="t j" style="left:148.00px;width:16.00px;top:144.70px;line-height:20px;font-size:8.2px;color:#3e3e3e;">国語</div>
<div class="t j" style="left:188.00px;width:16.00px;top:144.70px;line-height:20px;font-size:8.2px;color:#3e3e3e;">算数</div>
<div class="t j" style="left:227.50px;width:16.00px;top:144.70px;line-height:20px;font-size:8.2px;color:#3e3e3e;">英語</div>
<div class="t j" style="left:267.00px;width:16.00px;top:144.70px;line-height:20px;font-size:8.2px;color:#3e3e3e;">合否</div>
<div class="t j" style="left:98.50px;width:16.00px;top:158.90px;line-height:20px;font-size:8.2px;color:#3e3e3e;">佐藤</div>
<div class="t" style="left:-125.50px;width:300px;text-align:right;top:158.90px;line-height:20px;font-size:9.3px;color:#3e3e3e;">70</div>
<div class="t" style="left:-85.50px;width:300px;text-align:right;top:158.90px;line-height:20px;font-size:9.3px;color:#3e3e3e;">80</div>
<div class="t" style="left:-46.50px;width:300px;text-align:right;top:158.90px;line-height:20px;font-size:9.3px;color:#3e3e3e;">90</div>
<div class="t j" style="left:98.50px;width:16.00px;top:172.90px;line-height:20px;font-size:8.2px;color:#3e3e3e;">鈴木</div>
<div class="t" style="left:-125.50px;width:300px;text-align:right;top:172.90px;line-height:20px;font-size:9.3px;color:#3e3e3e;">60</div>
<div class="t" style="left:-85.50px;width:300px;text-align:right;top:172.90px;line-height:20px;font-size:9.3px;color:#3e3e3e;">60</div>
<div class="t" style="left:-46.50px;width:300px;text-align:right;top:172.90px;line-height:20px;font-size:9.3px;color:#3e3e3e;">60</div>
<div class="t j" style="left:98.50px;width:16.00px;top:186.70px;line-height:20px;font-size:8.2px;color:#3e3e3e;">山田</div>
<div class="t" style="left:-125.50px;width:300px;text-align:right;top:186.70px;line-height:20px;font-size:9.3px;color:#3e3e3e;">50</div>
<div class="t" style="left:-85.50px;width:300px;text-align:right;top:186.70px;line-height:20px;font-size:9.3px;color:#3e3e3e;">80</div>
<div class="t" style="left:-46.50px;width:300px;text-align:right;top:186.70px;line-height:20px;font-size:9.3px;color:#3e3e3e;">40</div>
<div style="left:96.50px;top:146.90px;width:199.00px;height:1.20px;background:#444"></div>
<div style="left:96.50px;top:161.20px;width:199.00px;height:1.00px;background:#6a6a6a"></div>
<div style="left:96.50px;top:175.20px;width:199.00px;height:1.00px;background:#6a6a6a"></div>
<div style="left:96.50px;top:189.00px;width:199.00px;height:1.00px;background:#6a6a6a"></div>
<div style="left:96.50px;top:202.80px;width:199.00px;height:1.20px;background:#3a3a3a"></div>
<div style="left:294.40px;top:133.00px;width:1.20px;height:70.90px;background:#3a3a3a"></div>
<div style="left:135.50px;top:147.00px;width:1.00px;height:56.90px;background:#6a6a6a"></div>
<div style="left:175.50px;top:147.00px;width:1.00px;height:56.90px;background:#6a6a6a"></div>
<div style="left:215.50px;top:147.00px;width:1.00px;height:56.90px;background:#6a6a6a"></div>
<div style="left:254.50px;top:147.00px;width:1.00px;height:56.90px;background:#6a6a6a"></div>
<div style="left:135.60px;top:161.20px;width:40.80px;height:15.00px;border:1.1px solid #6b9ad0"></div>
<div style="left:135.00px;top:160.40px;width:2.20px;height:2.20px;background:#3d6fb5"></div>
<div style="left:174.80px;top:160.40px;width:2.20px;height:2.20px;background:#3d6fb5"></div>
<div style="left:135.00px;top:174.60px;width:2.20px;height:2.20px;background:#3d6fb5"></div>
<div style="left:174.80px;top:174.60px;width:2.20px;height:2.20px;background:#3d6fb5"></div>
<div style="left:175.60px;top:161.20px;width:40.80px;height:15.00px;border:1.1px solid #de7c7a"></div>
<div style="left:214.80px;top:160.40px;width:2.20px;height:2.20px;background:#c0504d"></div>
<div style="left:214.80px;top:174.60px;width:2.20px;height:2.20px;background:#c0504d"></div>
<div style="left:255.80px;top:162.20px;width:79.00px;height:12.40px;background:#fff"></div>
<div style="left:254.20px;top:160.90px;width:41.60px;height:15.60px;border:1.5px solid #3f8660;border-right:none"></div>
<div class="t" style="left:256.50px;top:159.00px;line-height:20px;font-size:9.2px;color:#222;letter-spacing:-0.15px">=AND(<span style="color:#4f7fc0">B3</span>&gt;=60,<span style="color:#c0504d">C3</span>&gt;</div>
<div style="left:263.60px;top:177.10px;width:133.30px;height:10.40px;background:#fff;border:0.8px solid #c8c8c8;box-shadow:1px 1px 1px rgba(0,0,0,.08)"></div>
<div class="t j" style="left:267.00px;width:15.00px;top:172.20px;line-height:20px;font-size:6.6px;color:#666;">AND(</div>
<div class="t j" style="left:282.50px;width:27.50px;top:172.20px;line-height:20px;font-size:6.6px;color:#666;">論理式1,</div>
<div class="t j" style="left:314.40px;width:33.00px;top:172.20px;line-height:20px;font-size:6.6px;color:#333;font-weight:bold">[論理式2],</div>
<div class="t j" style="left:351.00px;width:31.50px;top:172.20px;line-height:20px;font-size:6.6px;color:#666;">[論理式3],</div>
<div class="t j" style="left:385.40px;width:10.30px;top:172.20px;line-height:20px;font-size:6.6px;color:#666;">...)</div>
<div style="left:97.00px;top:217.70px;width:158.00px;height:14.14px;background:#fce4d6"></div>
<div class="t j" style="left:160.00px;width:32.00px;top:214.90px;line-height:20px;font-size:8.2px;color:#3e3e3e;">診療予定</div>
<div class="t j" style="left:148.00px;width:16.00px;top:229.04px;line-height:20px;font-size:8.2px;color:#3e3e3e;">午前</div>
<div class="t j" style="left:188.00px;width:16.00px;top:229.04px;line-height:20px;font-size:8.2px;color:#3e3e3e;">午後</div>
<div class="t j" style="left:227.50px;width:16.00px;top:229.04px;line-height:20px;font-size:8.2px;color:#3e3e3e;">昼食</div>
<div class="t j" style="left:98.50px;width:16.00px;top:243.18px;line-height:20px;font-size:8.2px;color:#3e3e3e;">佐藤</div>
<div class="t j" style="left:98.50px;width:16.00px;top:257.32px;line-height:20px;font-size:8.2px;color:#3e3e3e;">鈴木</div>
<div class="t j" style="left:98.50px;width:16.00px;top:271.46px;line-height:20px;font-size:8.2px;color:#3e3e3e;">山田</div>
<div style="left:152.30px;top:249.28px;width:7.40px;height:7.40px;border:0.9px solid #555;border-radius:50%"></div>
<div style="left:192.30px;top:249.28px;width:7.40px;height:7.40px;border:0.9px solid #555;border-radius:50%"></div>
<div style="left:152.30px;top:263.42px;width:7.40px;height:7.40px;border:0.9px solid #555;border-radius:50%"></div>
<div style="left:192.30px;top:277.56px;width:7.40px;height:7.40px;border:0.9px solid #555;border-radius:50%"></div>
<div style="left:96.50px;top:217.10px;width:159.00px;height:1.20px;background:#3a3a3a"></div>
<div style="left:96.50px;top:231.24px;width:159.00px;height:1.20px;background:#444"></div>
<div style="left:96.50px;top:245.48px;width:159.00px;height:1.00px;background:#6a6a6a"></div>
<div style="left:96.50px;top:259.62px;width:159.00px;height:1.00px;background:#6a6a6a"></div>
<div style="left:96.50px;top:273.76px;width:159.00px;height:1.00px;background:#6a6a6a"></div>
<div style="left:96.50px;top:287.80px;width:159.00px;height:1.20px;background:#3a3a3a"></div>
<div style="left:254.40px;top:217.20px;width:1.20px;height:71.70px;background:#3a3a3a"></div>
<div style="left:135.50px;top:231.34px;width:1.00px;height:57.56px;background:#6a6a6a"></div>
<div style="left:175.50px;top:231.34px;width:1.00px;height:57.56px;background:#6a6a6a"></div>
<div style="left:215.50px;top:231.34px;width:1.00px;height:57.56px;background:#6a6a6a"></div>
<div style="left:414.70px;top:133.50px;width:450.90px;height:14.00px;background:#ededed"></div>
<div class="t j" style="left:608.15px;width:64.00px;top:130.70px;line-height:20px;font-size:8.2px;color:#3e3e3e;">比較演算式の見方</div>
<div style="left:414.70px;top:147.50px;width:153.90px;height:14.20px;background:#fce4d6"></div>
<div class="t j" style="left:467.65px;width:48.00px;top:144.70px;line-height:20px;font-size:8.2px;color:#3e3e3e;">不等号の見方</div>
<div style="left:568.60px;top:147.50px;width:121.70px;height:14.20px;background:#fff2cc"></div>
<div class="t j" style="left:609.45px;width:40.00px;top:144.70px;line-height:20px;font-size:8.2px;color:#3e3e3e;">入力ボタン</div>
<div style="left:690.30px;top:147.50px;width:175.30px;height:14.20px;background:#e2efda"></div>
<div class="t j" style="left:707.50px;width:140.91px;top:144.70px;line-height:20px;font-size:8.2px;color:#3e3e3e;">数学では下記の記号だが<span style="font-size:9px">Excel</span>では違う</div>
<div style="left:414.70px;top:161.70px;width:450.90px;height:14.00px;background:#ddebf7"></div>
<div class="t" style="left:417.70px;top:158.90px;line-height:20px;font-size:9px;color:#444;">&gt;</div>
<div class="t j" style="left:438.80px;width:41.50px;top:158.90px;line-height:20px;font-size:8px;color:#444;">大なり記号</div>
<div class="t j" style="left:504.50px;width:58.10px;top:158.90px;line-height:20px;font-size:8px;color:#444;">超過という意味</div>
<div class="t" style="left:570.60px;top:158.90px;line-height:20px;font-size:9px;color:#444;letter-spacing:-0.1px">Shift+</div>
<div class="t j" style="left:596.10px;width:24.50px;top:158.90px;line-height:20px;font-size:8px;color:#444;">「る」</div>
<div class="t j" style="left:691.80px;width:33.20px;top:158.90px;line-height:20px;font-size:8px;color:#444;">数学では</div>
<div class="t" style="left:595.65px;width:300px;text-align:center;top:158.90px;line-height:20px;font-size:8px;color:#444;">≧</div>
<div class="t j" style="left:754.30px;width:41.50px;top:158.90px;line-height:20px;font-size:8px;color:#444;">大なり記号</div>
<div class="t j" style="left:802.10px;width:58.10px;top:158.90px;line-height:20px;font-size:8px;color:#444;">以上という意味</div>
<div class="t" style="left:417.70px;top:172.90px;line-height:20px;font-size:9px;color:#444;">&lt;</div>
<div class="t j" style="left:438.80px;width:41.50px;top:172.90px;line-height:20px;font-size:8px;color:#444;">小なり記号</div>
<div class="t j" style="left:504.50px;width:58.10px;top:172.90px;line-height:20px;font-size:8px;color:#444;">未満という意味</div>
<div class="t" style="left:570.60px;top:172.90px;line-height:20px;font-size:9px;color:#444;letter-spacing:-0.1px">Shift+</div>
<div class="t j" style="left:596.10px;width:24.50px;top:172.90px;line-height:20px;font-size:8px;color:#444;">「ね」</div>
<div class="t j" style="left:691.80px;width:33.20px;top:172.90px;line-height:20px;font-size:8px;color:#444;">数学では</div>
<div class="t" style="left:595.65px;width:300px;text-align:center;top:172.90px;line-height:20px;font-size:8px;color:#444;">≦</div>
<div class="t j" style="left:754.30px;width:41.50px;top:172.90px;line-height:20px;font-size:8px;color:#444;">小なり記号</div>
<div class="t j" style="left:802.10px;width:58.10px;top:172.90px;line-height:20px;font-size:8px;color:#444;">以下という意味</div>
<div style="left:414.70px;top:189.50px;width:450.90px;height:13.90px;background:#ddebf7"></div>
<div class="t" style="left:417.70px;top:186.70px;line-height:20px;font-size:9px;color:#444;">&gt; =</div>
<div class="t j" style="left:438.80px;width:58.10px;top:186.70px;line-height:20px;font-size:8px;color:#444;">大なりイコール</div>
<div class="t j" style="left:504.50px;width:58.10px;top:186.70px;line-height:20px;font-size:8px;color:#444;">以上という意味</div>
<div class="t" style="left:570.60px;top:186.70px;line-height:20px;font-size:9px;color:#444;letter-spacing:-0.1px">Shift+</div>
<div class="t j" style="left:596.10px;width:24.50px;top:186.70px;line-height:20px;font-size:8px;color:#444;">「る」</div>
<div class="t" style="left:621.60px;top:186.70px;line-height:20px;font-size:8px;color:#444;">、</div>
<div class="t" style="left:628.60px;top:186.70px;line-height:20px;font-size:9px;color:#444;letter-spacing:-0.1px">Shift+</div>
<div class="t j" style="left:654.10px;width:24.50px;top:186.70px;line-height:20px;font-size:8px;color:#444;">「ほ」</div>
<div class="t" style="left:417.70px;top:200.60px;line-height:20px;font-size:9px;color:#444;">&lt; =</div>
<div class="t j" style="left:438.80px;width:58.10px;top:200.60px;line-height:20px;font-size:8px;color:#444;">小なりイコール</div>
<div class="t j" style="left:504.50px;width:58.10px;top:200.60px;line-height:20px;font-size:8px;color:#444;">以下という意味</div>
<div class="t" style="left:570.60px;top:200.60px;line-height:20px;font-size:9px;color:#444;letter-spacing:-0.1px">Shift+</div>
<div class="t j" style="left:596.10px;width:24.50px;top:200.60px;line-height:20px;font-size:8px;color:#444;">「ね」</div>
<div class="t" style="left:621.60px;top:200.60px;line-height:20px;font-size:8px;color:#444;">、</div>
<div class="t" style="left:628.60px;top:200.60px;line-height:20px;font-size:9px;color:#444;letter-spacing:-0.1px">Shift+</div>
<div class="t j" style="left:654.10px;width:24.50px;top:200.60px;line-height:20px;font-size:8px;color:#444;">「ほ」</div>
<div style="left:414.70px;top:217.70px;width:450.90px;height:14.14px;background:#ddebf7"></div>
<div class="t" style="left:417.70px;top:214.90px;line-height:20px;font-size:9px;color:#444;"> =</div>
<div class="t j" style="left:438.80px;width:33.20px;top:214.90px;line-height:20px;font-size:8px;color:#444;">イコール</div>
<div class="t j" style="left:504.50px;width:24.90px;top:214.90px;line-height:20px;font-size:8px;color:#444;">等しい</div>
<div class="t" style="left:570.60px;top:214.90px;line-height:20px;font-size:9px;color:#444;letter-spacing:-0.1px">Shift+</div>
<div class="t j" style="left:596.10px;width:24.50px;top:214.90px;line-height:20px;font-size:8px;color:#444;">「ほ」</div>
<div class="t" style="left:417.70px;top:229.04px;line-height:20px;font-size:9px;color:#444;">&lt; &gt;</div>
<div class="t j" style="left:438.80px;width:49.80px;top:229.04px;line-height:20px;font-size:8px;color:#444;">小なり大なり</div>
<div class="t j" style="left:504.50px;width:41.50px;top:229.04px;line-height:20px;font-size:8px;color:#444;">等しくない</div>
<div class="t" style="left:570.60px;top:229.04px;line-height:20px;font-size:9px;color:#444;letter-spacing:-0.1px">Shift+</div>
<div class="t j" style="left:596.10px;width:24.50px;top:229.04px;line-height:20px;font-size:8px;color:#444;">「ね」</div>
<div class="t" style="left:621.60px;top:229.04px;line-height:20px;font-size:8px;color:#444;">、</div>
<div class="t" style="left:628.60px;top:229.04px;line-height:20px;font-size:9px;color:#444;letter-spacing:-0.1px">Shift+</div>
<div class="t j" style="left:654.10px;width:24.50px;top:229.04px;line-height:20px;font-size:8px;color:#444;">「る」</div>
<div style="left:414.20px;top:146.90px;width:451.90px;height:1.20px;background:#3a3a3a"></div>
<div style="left:414.20px;top:161.10px;width:451.90px;height:1.20px;background:#3a3a3a"></div>
<div style="left:414.20px;top:175.20px;width:451.90px;height:1.00px;background:#6a6a6a"></div>
<div style="left:414.20px;top:189.00px;width:451.90px;height:1.00px;background:#6a6a6a"></div>
<div style="left:414.20px;top:202.90px;width:451.90px;height:1.00px;background:#6a6a6a"></div>
<div style="left:414.20px;top:217.20px;width:451.90px;height:1.00px;background:#6a6a6a"></div>
<div style="left:414.20px;top:231.34px;width:451.90px;height:1.00px;background:#6a6a6a"></div>
<div style="left:414.20px;top:245.38px;width:451.90px;height:1.20px;background:#3a3a3a"></div>
<div style="left:414.10px;top:133.00px;width:1.20px;height:113.48px;background:#3a3a3a"></div>
<div style="left:865.00px;top:133.00px;width:1.20px;height:113.48px;background:#3a3a3a"></div>
<div style="left:568.00px;top:147.00px;width:1.20px;height:99.48px;background:#3a3a3a"></div>
<div style="left:689.60px;top:147.00px;width:1.40px;height:99.48px;background:#3a3a3a"></div>
<div style="left:436.80px;top:161.20px;width:1.00px;height:85.28px;background:#8a8a8a"></div>
<div style="left:502.50px;top:161.20px;width:1.00px;height:85.28px;background:#8a8a8a"></div>
<div style="left:738.00px;top:161.20px;width:1.00px;height:85.28px;background:#5a5a5a"></div>
<div style="left:752.30px;top:161.20px;width:1.00px;height:85.28px;background:#5a5a5a"></div>
<div style="left:800.10px;top:161.20px;width:1.00px;height:85.28px;background:#5a5a5a"></div>
<div style="left:503.00px;top:260.12px;width:187.30px;height:14.14px;background:#fce4d6"></div>
<div style="left:503px;top:260.12px;width:187.29999999999995px;height:14px;overflow:hidden"><div class="t j" style="left:2px;width:185px;top:-2.8px;line-height:20px;font-size:8px;color:#3e3e3e">「超過」、「未満」、「以上」、「以下」の意味</div></div>
<div class="t j" style="left:504.50px;width:16.40px;top:271.46px;line-height:20px;font-size:8px;color:#444;">超過</div>
<div class="t j" style="left:570.10px;width:65.60px;top:271.46px;line-height:20px;font-size:8px;color:#444;">その数を含まない</div>
<div class="t j" style="left:504.50px;width:16.40px;top:285.60px;line-height:20px;font-size:8px;color:#444;">未満</div>
<div class="t j" style="left:570.10px;width:65.60px;top:285.60px;line-height:20px;font-size:8px;color:#444;">その数を含まない</div>
<div class="t j" style="left:504.50px;width:16.40px;top:299.30px;line-height:20px;font-size:8px;color:#444;">以上</div>
<div class="t j" style="left:570.10px;width:49.20px;top:299.30px;line-height:20px;font-size:8px;color:#444;">その数を含む</div>
<div class="t j" style="left:504.50px;width:16.40px;top:313.30px;line-height:20px;font-size:8px;color:#444;">以下</div>
<div class="t j" style="left:570.10px;width:49.20px;top:313.30px;line-height:20px;font-size:8px;color:#444;">その数を含む</div>
<div style="left:502.50px;top:259.52px;width:188.30px;height:1.20px;background:#3a3a3a"></div>
<div style="left:502.50px;top:273.66px;width:188.30px;height:1.20px;background:#3a3a3a"></div>
<div style="left:502.50px;top:287.90px;width:188.30px;height:1.00px;background:#6a6a6a"></div>
<div style="left:502.50px;top:301.60px;width:188.30px;height:1.00px;background:#6a6a6a"></div>
<div style="left:502.50px;top:315.60px;width:188.30px;height:1.00px;background:#6a6a6a"></div>
<div style="left:502.50px;top:329.80px;width:188.30px;height:1.20px;background:#3a3a3a"></div>
<div style="left:502.40px;top:259.62px;width:1.20px;height:71.28px;background:#3a3a3a"></div>
<div style="left:689.70px;top:259.62px;width:1.20px;height:71.28px;background:#3a3a3a"></div>
<div style="left:568.10px;top:273.76px;width:1.00px;height:57.14px;background:#6a6a6a"></div>
<div style="left:503.00px;top:344.60px;width:187.30px;height:13.90px;background:#fff2cc"></div>
<div class="t j" style="left:522.27px;width:148.76px;top:341.80px;line-height:20px;font-size:8px;color:#3e3e3e;">「<span style="font-size:9px">TRUE</span>」と「<span style="font-size:9px">FALSE</span>」の意味（真偽）</div>
<div class="t" style="left:385.80px;width:300px;text-align:center;top:355.70px;line-height:20px;font-size:8.2px;color:#444;">TRUE</div>
<div class="t j" style="left:570.10px;width:49.20px;top:355.70px;line-height:20px;font-size:8px;color:#444;">真（正しい）</div>
<div class="t" style="left:385.80px;width:300px;text-align:center;top:369.60px;line-height:20px;font-size:8.2px;color:#444;">FALSE</div>
<div class="t j" style="left:570.10px;width:65.60px;top:369.60px;line-height:20px;font-size:8px;color:#444;">偽（正しくない）</div>
<div style="left:502.50px;top:344.00px;width:188.30px;height:1.20px;background:#3a3a3a"></div>
<div style="left:502.50px;top:357.90px;width:188.30px;height:1.20px;background:#3a3a3a"></div>
<div style="left:502.50px;top:371.90px;width:188.30px;height:1.00px;background:#6a6a6a"></div>
<div style="left:502.50px;top:385.70px;width:188.30px;height:1.20px;background:#3a3a3a"></div>
<div style="left:502.40px;top:344.10px;width:1.20px;height:42.70px;background:#3a3a3a"></div>
<div style="left:689.70px;top:344.10px;width:1.20px;height:42.70px;background:#3a3a3a"></div>
<div style="left:568.10px;top:358.00px;width:1.00px;height:28.80px;background:#6a6a6a"></div>
<div style="left:437.30px;top:414.27px;width:131.30px;height:13.99px;background:#e2efda"></div>
<div class="t j" style="left:482.45px;width:41.00px;top:411.47px;line-height:20px;font-size:8px;color:#3e3e3e;">関連の関数</div>
<div class="t j" style="left:438.80px;width:34.45px;top:425.46px;line-height:20px;font-size:8px;color:#444;"><span style="font-size:9px">AND</span>関数</div>
<div class="t" style="left:504.50px;top:425.46px;line-height:20px;font-size:8px;color:#444;"><span style="font-size:9px">A</span>と<span style="font-size:9px">B</span></div>
<div class="t j" style="left:438.80px;width:29.23px;top:439.44px;line-height:20px;font-size:8px;color:#444;"><span style="font-size:9px">OR</span>関数</div>
<div class="t j" style="left:504.50px;width:36.01px;top:439.44px;line-height:20px;font-size:8px;color:#444;"><span style="font-size:9px">A</span>または<span style="font-size:9px">B</span></div>
<div class="t j" style="left:438.80px;width:34.45px;top:453.43px;line-height:20px;font-size:8px;color:#444;"><span style="font-size:9px">NOT</span>関数</div>
<div class="t j" style="left:504.50px;width:38.50px;top:453.43px;line-height:20px;font-size:8px;color:#444;"><span style="font-size:9px">A</span>ではない</div>
<div style="left:436.80px;top:413.67px;width:132.30px;height:1.20px;background:#3a3a3a"></div>
<div style="left:436.80px;top:427.66px;width:132.30px;height:1.20px;background:#3a3a3a"></div>
<div style="left:436.80px;top:441.74px;width:132.30px;height:1.00px;background:#6a6a6a"></div>
<div style="left:436.80px;top:455.73px;width:132.30px;height:1.00px;background:#6a6a6a"></div>
<div style="left:436.80px;top:469.61px;width:132.30px;height:1.20px;background:#3a3a3a"></div>
<div style="left:436.70px;top:413.77px;width:1.20px;height:56.94px;background:#3a3a3a"></div>
<div style="left:568.00px;top:413.77px;width:1.20px;height:56.94px;background:#3a3a3a"></div>
<div style="left:502.50px;top:427.76px;width:1.00px;height:42.96px;background:#6a6a6a"></div>
<svg style="position:absolute;left:346.1px;top:245.1px" width="20" height="20"><circle cx="10" cy="10" r="7.2" fill="#f3837b"/><path d="M10 6.2 v7.6 M6.2 10 h7.6" stroke="#3a2020" stroke-width="3.6"/><path d="M10 6.8 v6.4 M6.8 10 h6.4" stroke="#fff" stroke-width="2.2"/></svg>
<div style="left:96.70px;top:364.00px;width:332.30px;height:37.00px;background:#fff;border:4.4px solid #f50505"></div>
<div style="left:95.60px;top:396.60px;width:333.40px;height:129.90px;background:#fff;border:4.5px solid #f50505"></div>
<div class="t j" style="left:106.50px;width:315.00px;top:371.60px;line-height:20px;font-size:12.6px;color:#f50505;font-weight:bold;-webkit-text-stroke:0.25px #f50505">「イコール」は「Shift」を押しながら「ほ」のボタン</div>
<div class="k" style="left:107.00px;top:404.50px;width:17.70px;height:11.20px;"><span style="left:1.5px;top:1.2px;font-weight:bold">ESC</span></div><div class="k" style="left:126.30px;top:404.50px;width:17.60px;height:11.20px;"><span style="left:1.5px;top:1.2px;">F1</span></div><div class="k" style="left:145.50px;top:404.50px;width:17.60px;height:11.20px;"><span style="left:1.5px;top:1.2px;">F2</span></div><div class="k" style="left:164.70px;top:404.50px;width:17.60px;height:11.20px;"><span style="left:1.5px;top:1.2px;">F3</span></div><div class="k" style="left:183.90px;top:404.50px;width:17.60px;height:11.20px;"><span style="left:1.5px;top:1.2px;">F4</span></div><div class="k" style="left:203.10px;top:404.50px;width:17.60px;height:11.20px;"><span style="left:1.5px;top:1.2px;">F5</span></div><div class="k" style="left:222.30px;top:404.50px;width:17.60px;height:11.20px;"><span style="left:1.5px;top:1.2px;">F6</span></div><div class="k" style="left:241.50px;top:404.50px;width:17.60px;height:11.20px;"><span style="left:1.5px;top:1.2px;">F7</span></div><div class="k" style="left:260.70px;top:404.50px;width:17.60px;height:11.20px;"><span style="left:1.5px;top:1.2px;">F8</span></div><div class="k" style="left:279.90px;top:404.50px;width:17.60px;height:11.20px;"><span style="left:1.5px;top:1.2px;">F9</span></div><div class="k" style="left:299.10px;top:404.50px;width:17.60px;height:11.20px;"><span style="left:1.5px;top:1.2px;">F10</span></div><div class="k" style="left:318.30px;top:404.50px;width:17.60px;height:11.20px;"><span style="left:1.5px;top:1.2px;">F11</span></div><div class="k" style="left:337.50px;top:404.50px;width:17.60px;height:11.20px;"><span style="left:1.5px;top:1.2px;">F12</span></div><div class="k" style="left:356.00px;top:404.50px;width:20.00px;height:11.20px;"><span style="left:1px;top:0px;line-height:4.5px;font-size:4.5px">Pause<br>Break</span></div><div class="k" style="left:377.00px;top:404.50px;width:20.00px;height:11.20px;"><span style="left:1px;top:0px;line-height:4.5px;font-size:4.5px">Insert<br>PrtScr</span></div><div class="k" style="left:398.00px;top:404.50px;width:20.00px;height:11.20px;"><span style="left:1px;top:0px;line-height:4.5px;font-size:4.5px">Delete<br>SysRq</span></div><div class="k" style="left:107.00px;top:417.70px;width:19.90px;height:18.80px;"><span style="left:2px;top:1.5px;line-height:5px;font-size:4.5px">半角/<br>全角<br>漢字</span></div><div class="k" style="left:128.00px;top:417.70px;width:18.80px;height:18.80px;"><span style="left:3px;top:2px;">!</span><span style="left:3px;top:10px;">1</span><span style="left:10.5px;top:10px;font-size:5.5px">ぬ</span></div><div class="k" style="left:148.80px;top:417.70px;width:18.80px;height:18.80px;"><span style="left:3px;top:2px;">&quot;</span><span style="left:3px;top:10px;">2</span><span style="left:10.5px;top:10px;font-size:5.5px">ふ</span></div><div class="k" style="left:169.60px;top:417.70px;width:18.80px;height:18.80px;"><span style="left:3px;top:2px;">#</span><span style="left:3px;top:10px;">3</span><span style="left:10.5px;top:10px;font-size:5.5px">あ</span></div><div class="k" style="left:190.40px;top:417.70px;width:18.80px;height:18.80px;"><span style="left:3px;top:2px;">$</span><span style="left:3px;top:10px;">4</span><span style="left:10.5px;top:10px;font-size:5.5px">う</span></div><div class="k" style="left:211.20px;top:417.70px;width:18.80px;height:18.80px;"><span style="left:3px;top:2px;">%</span><span style="left:3px;top:10px;">5</span><span style="left:10.5px;top:10px;font-size:5.5px">え</span></div><div class="k" style="left:232.00px;top:417.70px;width:18.80px;height:18.80px;"><span style="left:3px;top:2px;">&amp;</span><span style="left:3px;top:10px;">6</span><span style="left:10.5px;top:10px;font-size:5.5px">お</span></div><div class="k" style="left:252.80px;top:417.70px;width:18.80px;height:18.80px;"><span style="left:3px;top:2px;">'</span><span style="left:3px;top:10px;">7</span><span style="left:10.5px;top:10px;font-size:5.5px">や</span></div><div class="k" style="left:273.60px;top:417.70px;width:18.80px;height:18.80px;"><span style="left:3px;top:2px;">(</span><span style="left:3px;top:10px;">8</span><span style="left:10.5px;top:10px;font-size:5.5px">ゆ</span></div><div class="k" style="left:294.40px;top:417.70px;width:18.80px;height:18.80px;"><span style="left:3px;top:2px;">)</span><span style="left:3px;top:10px;">9</span><span style="left:10.5px;top:10px;font-size:5.5px">よ</span></div><div class="k" style="left:315.20px;top:417.70px;width:18.80px;height:18.80px;"><span style="left:3px;top:2px;"></span><span style="left:3px;top:10px;">0</span><span style="left:10.5px;top:10px;font-size:5.5px">わ</span></div><div class="k" style="left:336.00px;top:417.70px;width:18.80px;height:18.80px;"><span style="left:3px;top:2px;">=</span><span style="left:3px;top:10px;">−</span><span style="left:10.5px;top:10px;font-size:5.5px">ほ</span></div><div class="k" style="left:356.80px;top:417.70px;width:18.80px;height:18.80px;"><span style="left:3px;top:2px;">~</span><span style="left:3px;top:10px;">^</span><span style="left:10.5px;top:10px;font-size:5.5px">へ</span></div><div class="k" style="left:377.60px;top:417.70px;width:18.80px;height:18.80px;"><span style="left:3px;top:2px;">|</span><span style="left:3px;top:10px;">¥</span><span style="left:10.5px;top:10px;font-size:5.5px">ー</span></div><div class="k" style="left:398.00px;top:417.70px;width:20.00px;height:18.80px;"><span style="left:2px;top:3px;line-height:5.5px;font-size:5.5px">Back<br>space</span></div><div class="k" style="left:107.00px;top:437.80px;width:34.00px;height:18.20px;"><span style="left:2px;top:2px;font-size:6.5px">Tab</span><svg style="position:absolute;left:2px;top:9px" width="22" height="8"><g stroke="#111" stroke-width="0.9" fill="none"><path d="M1 0.5 v4 M1.5 2.5 h14 M19.5 3.5 v4 M5 5.5 h14"/></g><path d="M1.5 2.5 l3 -1.8 v3.6z M19 5.5 l-3 -1.8 v3.6z" fill="#111"/></svg></div><div class="k" style="left:143.60px;top:437.80px;width:18.80px;height:18.20px;"><span style="left:3px;top:2px;">Q</span><span style="left:10.5px;top:9.5px;font-size:5.5px">た</span></div><div class="k" style="left:164.40px;top:437.80px;width:18.80px;height:18.20px;"><span style="left:3px;top:2px;">W</span><span style="left:10.5px;top:9.5px;font-size:5.5px">て</span></div><div class="k" style="left:185.20px;top:437.80px;width:18.80px;height:18.20px;"><span style="left:3px;top:2px;">E</span><span style="left:10.5px;top:9.5px;font-size:5.5px">い</span></div><div class="k" style="left:206.00px;top:437.80px;width:18.80px;height:18.20px;"><span style="left:3px;top:2px;">R</span><span style="left:10.5px;top:9.5px;font-size:5.5px">す</span></div><div class="k" style="left:226.80px;top:437.80px;width:18.80px;height:18.20px;"><span style="left:3px;top:2px;">T</span><span style="left:10.5px;top:9.5px;font-size:5.5px">か</span></div><div class="k" style="left:247.60px;top:437.80px;width:18.80px;height:18.20px;"><span style="left:3px;top:2px;">Y</span><span style="left:10.5px;top:9.5px;font-size:5.5px">ん</span></div><div class="k" style="left:268.40px;top:437.80px;width:18.80px;height:18.20px;"><span style="left:3px;top:2px;">U</span><span style="left:10.5px;top:9.5px;font-size:5.5px">な</span></div><div class="k" style="left:289.20px;top:437.80px;width:18.80px;height:18.20px;"><span style="left:3px;top:2px;">I</span><span style="left:10.5px;top:9.5px;font-size:5.5px">に</span></div><div class="k" style="left:310.00px;top:437.80px;width:18.80px;height:18.20px;"><span style="left:3px;top:2px;">O</span><span style="left:10.5px;top:9.5px;font-size:5.5px">ら</span></div><div class="k" style="left:330.80px;top:437.80px;width:18.80px;height:18.20px;"><span style="left:3px;top:2px;">P</span><span style="left:10.5px;top:9.5px;font-size:5.5px">せ</span></div><div class="k" style="left:351.60px;top:437.80px;width:18.80px;height:18.20px;"><span style="left:3px;top:2px;">@</span><span style="left:10.5px;top:9.5px;font-size:5.5px">゛</span></div><div class="k" style="left:372.40px;top:437.80px;width:18.80px;height:18.20px;"><span style="left:3px;top:2px;">[</span><span style="left:10.5px;top:9.5px;font-size:5.5px">゜</span></div><svg style="position:absolute;left:390px;top:436px" width="30" height="42"><path d="M3 2.6 h23.5 a2 2 0 0 1 2 2 v33.8 a2 2 0 0 1 -2 2 h-18 a2 2 0 0 1 -2 -2 v-17.2 l-1.2 -0.6 a2 2 0 0 1 -2 -2 v-14 a2 2 0 0 1 2 -2z" transform="translate(0,1)" fill="#b0b0b0"/><path d="M3 2.6 h23.5 a2 2 0 0 1 2 2 v33.8 a2 2 0 0 1 -2 2 h-18 a2 2 0 0 1 -2 -2 v-17.2 l-1.2 -0.6 a2 2 0 0 1 -2 -2 v-14 a2 2 0 0 1 2 -2z" fill="#fff" stroke="#8c8c8c" stroke-width="1.5"/><text x="8" y="10.5" font-size="5.8" fill="#2a2a2a" font-family="Liberation Sans">Enter</text><path d="M11 16.5 h11 v-3" fill="none" stroke="#222" stroke-width="0.9"/><path d="M10 16.5 l3 -1.8 v3.6z" fill="#222"/></svg><div class="k" style="left:107.00px;top:458.00px;width:38.40px;height:17.20px;"><span style="left:2px;top:2.5px;font-size:6.5px">Caps Lock</span><span style="left:3px;top:10px;font-size:4.5px">英数</span></div><div class="k" style="left:147.00px;top:458.00px;width:18.80px;height:17.20px;"><span style="left:3px;top:2px;">A</span><span style="left:10.5px;top:9px;font-size:5.5px">ち</span></div><div class="k" style="left:167.80px;top:458.00px;width:18.80px;height:17.20px;"><span style="left:3px;top:2px;">S</span><span style="left:10.5px;top:9px;font-size:5.5px">と</span></div><div class="k" style="left:188.60px;top:458.00px;width:18.80px;height:17.20px;"><span style="left:3px;top:2px;">D</span><span style="left:10.5px;top:9px;font-size:5.5px">し</span></div><div class="k" style="left:209.40px;top:458.00px;width:18.80px;height:17.20px;"><span style="left:3px;top:2px;">F</span><span style="left:10.5px;top:9px;font-size:5.5px">は</span></div><div class="k" style="left:230.20px;top:458.00px;width:18.80px;height:17.20px;"><span style="left:3px;top:2px;">G</span><span style="left:10.5px;top:9px;font-size:5.5px">き</span></div><div class="k" style="left:251.00px;top:458.00px;width:18.80px;height:17.20px;"><span style="left:3px;top:2px;">H</span><span style="left:10.5px;top:9px;font-size:5.5px">く</span></div><div class="k" style="left:271.80px;top:458.00px;width:18.80px;height:17.20px;"><span style="left:3px;top:2px;">J</span><span style="left:10.5px;top:9px;font-size:5.5px">ま</span></div><div class="k" style="left:292.60px;top:458.00px;width:18.80px;height:17.20px;"><span style="left:3px;top:2px;">K</span><span style="left:10.5px;top:9px;font-size:5.5px">の</span></div><div class="k" style="left:313.40px;top:458.00px;width:18.80px;height:17.20px;"><span style="left:3px;top:2px;">L</span><span style="left:10.5px;top:9px;font-size:5.5px">り</span></div><div class="k" style="left:334.20px;top:458.00px;width:18.80px;height:17.20px;"><span style="left:3px;top:2px;">+</span><span style="left:10.5px;top:9px;font-size:5.5px">れ</span></div><div class="k" style="left:355.00px;top:458.00px;width:18.80px;height:17.20px;"><span style="left:3px;top:2px;">*</span><span style="left:10.5px;top:9px;font-size:5.5px">け</span></div><div class="k" style="left:375.80px;top:458.00px;width:18.80px;height:17.20px;"><span style="left:3px;top:2px;">]</span><span style="left:10.5px;top:9px;font-size:5.5px">む</span></div><div class="k" style="left:107.00px;top:477.80px;width:43.60px;height:18.20px;"><svg style="position:absolute;left:3px;top:5.5px" width="7" height="6"><path d="M3.5 0.3 L6.8 3.3 H4.7 V5.6 H2.3 V3.3 H0.2z" fill="#111"/></svg><span style="left:11px;top:5.5px;font-size:5.8px">Shift</span></div><div class="k" style="left:152.00px;top:477.80px;width:18.80px;height:18.20px;"><span style="left:3px;top:2px;">Z</span><span style="left:10.5px;top:10px;font-size:5.5px">つ</span></div><div class="k" style="left:172.80px;top:477.80px;width:18.80px;height:18.20px;"><span style="left:3px;top:2px;">X</span><span style="left:10.5px;top:10px;font-size:5.5px">さ</span></div><div class="k" style="left:193.60px;top:477.80px;width:18.80px;height:18.20px;"><span style="left:3px;top:2px;">C</span><span style="left:10.5px;top:10px;font-size:5.5px">そ</span></div><div class="k" style="left:214.40px;top:477.80px;width:18.80px;height:18.20px;"><span style="left:3px;top:2px;">V</span><span style="left:10.5px;top:10px;font-size:5.5px">ひ</span></div><div class="k" style="left:235.20px;top:477.80px;width:18.80px;height:18.20px;"><span style="left:3px;top:2px;">B</span><span style="left:10.5px;top:10px;font-size:5.5px">こ</span></div><div class="k" style="left:256.00px;top:477.80px;width:18.80px;height:18.20px;"><span style="left:3px;top:2px;">N</span><span style="left:10.5px;top:10px;font-size:5.5px">み</span></div><div class="k" style="left:276.80px;top:477.80px;width:18.80px;height:18.20px;"><span style="left:3px;top:2px;">M</span><span style="left:10.5px;top:10px;font-size:5.5px">も</span></div><div class="k" style="left:297.60px;top:477.80px;width:18.80px;height:18.20px;"><span style="left:3px;top:2px;">&lt;</span><span style="left:10.5px;top:10px;font-size:5.5px">ね</span></div><div class="k" style="left:318.40px;top:477.80px;width:18.80px;height:18.20px;"><span style="left:3px;top:2px;">&gt;</span><span style="left:10.5px;top:10px;font-size:5.5px">る</span></div><div class="k" style="left:339.20px;top:477.80px;width:18.80px;height:18.20px;"><span style="left:3px;top:2px;">?</span><span style="left:10.5px;top:10px;font-size:5.5px">め</span></div><div class="k" style="left:360.00px;top:477.80px;width:18.80px;height:18.20px;"><span style="left:3px;top:2px;">_</span><span style="left:10.5px;top:10px;font-size:5.5px">ろ</span></div><div class="k" style="left:381.00px;top:477.80px;width:16.50px;height:18.20px;"><svg style="position:absolute;left:4.5px;top:1.5px" width="7" height="8"><path d="M3.5 1.5 V7.5" stroke="#111" stroke-width="1.1"/><path d="M3.5 0.2 L6 3.2 H1z" fill="#111"/></svg><span style="left:2px;top:10px;font-size:5px">PgUp</span></div><div class="k" style="left:400.00px;top:477.80px;width:17.50px;height:18.20px;"><span style="left:2px;top:2px;font-size:5.8px">Shift</span><svg style="position:absolute;left:5px;top:9px" width="7" height="6"><path d="M3.5 0.3 L6.8 3.3 H4.7 V5.6 H2.3 V3.3 H0.2z" fill="#111"/></svg></div><div class="k" style="left:107.00px;top:498.80px;width:18.00px;height:18.20px;"><span style="left:4.5px;top:6px;font-size:6.5px">Fn</span></div><div class="k" style="left:127.00px;top:498.80px;width:19.00px;height:18.20px;"><span style="left:3px;top:6px;font-size:6.5px">Ctrl</span></div><div class="k" style="left:149.00px;top:498.80px;width:19.00px;height:18.20px;"><b style="position:absolute;left:5px;top:5px;width:3.4px;height:3.2px;background:#111;box-shadow:4px 0 #111,0 3.8px #111,4px 3.8px #111"></b></div><div class="k" style="left:170.00px;top:498.80px;width:18.00px;height:18.20px;"><span style="left:4px;top:6px;font-size:6.5px">Alt</span></div><div class="k" style="left:191.00px;top:498.80px;width:16.00px;height:18.20px;"><span style="left:1px;top:6.5px;font-size:4px">無変換</span></div><div class="k" style="left:209.00px;top:498.80px;width:70.50px;height:18.20px;"></div><div class="k" style="left:283.00px;top:498.80px;width:15.00px;height:18.20px;"><span style="left:2px;top:6.5px;font-size:4px">変換</span></div><div class="k" style="left:300.00px;top:498.80px;width:19.00px;height:18.20px;"><span style="left:1.5px;top:2px;font-size:4px;line-height:4.5px">カタカナ<br>ひらがな<br>ローマ字</span></div><div class="k" style="left:322.00px;top:498.80px;width:16.00px;height:18.20px;"><b style="position:absolute;left:5px;top:4px;width:5px;height:8px;border:0.8px solid #333;background:linear-gradient(#333 30%,#fff 30%)"></b></div><div class="k" style="left:341.00px;top:498.80px;width:17.00px;height:18.20px;"><span style="left:3px;top:6px;font-size:6.5px">Ctrl</span></div><div class="k" style="left:361.00px;top:498.80px;width:17.00px;height:18.20px;"><svg style="position:absolute;left:3px;top:2.5px" width="10" height="6"><path d="M1.5 3 H9.5" stroke="#111" stroke-width="1.1"/><path d="M0.2 3 L3.2 0.6 V5.4z" fill="#111"/></svg><span style="left:1.5px;top:10px;font-size:5px">Home</span></div><div class="k" style="left:381.00px;top:498.80px;width:16.50px;height:18.20px;"><svg style="position:absolute;left:4.5px;top:1.5px" width="7" height="8"><path d="M3.5 0.2 V6.5" stroke="#111" stroke-width="1.1"/><path d="M3.5 7.8 L6 4.8 H1z" fill="#111"/></svg><span style="left:2px;top:10px;font-size:5px">PgDn</span></div><div class="k" style="left:400.00px;top:498.80px;width:17.50px;height:18.20px;"><svg style="position:absolute;left:3px;top:2.5px" width="10" height="6"><path d="M0.5 3 H8.5" stroke="#111" stroke-width="1.1"/><path d="M9.8 3 L6.8 0.6 V5.4z" fill="#111"/></svg><span style="left:3.5px;top:10px;font-size:5px">End</span></div>
<div style="left:330.00px;top:412.00px;width:31.00px;height:33.50px;border:4.2px solid #f50505;border-radius:5px"></div>
<div style="left:103.70px;top:475.00px;width:51.30px;height:24.20px;border:4.2px solid #f50505;border-radius:5px"></div>
<div style="left:80.00px;top:528.30px;width:864.00px;height:12.10px;background:#e6e6e6"></div>
<svg style="position:absolute;left:88px;top:530px" width="30" height="9"><path d="M5 2 l-2.5 2.5 l2.5 2.5 M17 2 l2.5 2.5 l-2.5 2.5" fill="none" stroke="#bbb" stroke-width=".9"/></svg>
<div style="left:121.60px;top:528.30px;width:37.40px;height:12.00px;background:#fff;box-shadow:1px 0 1px rgba(0,0,0,.15)"></div>
<div style="left:121.60px;top:538.60px;width:37.40px;height:1.60px;background:#217346"></div>
<div class="t" style="left:127.30px;top:523.60px;line-height:20px;font-size:8.2px;color:#217346;">Sheet1</div>
<svg style="position:absolute;left:166px;top:528.5px" width="12" height="12"><circle cx="6" cy="6" r="4.5" fill="none" stroke="#777" stroke-width=".9"/><path d="M6 3.5v5M3.5 6h5" stroke="#777" stroke-width=".9"/></svg>
<svg style="position:absolute;left:595px;top:530px" width="4" height="10"><g fill="#aaa"><rect x="1" y="1" width="1" height="1"/><rect x="1" y="4" width="1" height="1"/><rect x="1" y="7" width="1" height="1"/></g></svg>
<div style="left:604.00px;top:531.00px;width:329.00px;height:8.00px;background:#fff"></div>
<div style="left:604.00px;top:531.00px;width:9.00px;height:8.00px;border:0.8px solid #ccc"></div>
<div style="left:924.00px;top:531.00px;width:9.00px;height:8.00px;border:0.8px solid #ccc"></div>
<svg style="position:absolute;left:604px;top:531px" width="329" height="9"><path d="M6 2 l-2.5 2.2 l2.5 2.2z M323 2 l2.5 2.2 l-2.5 2.2z" fill="#444"/></svg>
<div style="left:80.00px;top:540.00px;width:864.00px;height:13.00px;background:#f3f3f3"></div>
<div class="t j" style="left:84.00px;width:12.00px;top:536.50px;line-height:20px;font-size:6.8px;color:#555;">入力</div>
<svg style="position:absolute;left:720px;top:541px" width="12" height="11"><rect x="1.5" y="2.5" width="8" height="5.5" fill="none" stroke="#555" stroke-width=".9"/><rect x="4.5" y="5.5" width="5" height="4.5" fill="#555"/></svg>
<div class="t j" style="left:732.00px;width:27.00px;top:536.50px;line-height:20px;font-size:6.6px;color:#555;">表示設定</div>
<svg style="position:absolute;left:774px;top:541px" width="170" height="11"><g fill="none" stroke="#9a9a9a" stroke-width=".9"><rect x="1.5" y="1.5" width="9" height="8"/><path d="M1.5 4.5h9M1.5 7h9M4.5 1.5v8M7.5 1.5v8"/><rect x="24.5" y="1.5" width="9" height="8"/><rect x="27" y="3" width="4" height="5"/><rect x="47.5" y="1.5" width="9" height="8"/><path d="M50 4.5 h4"/><path d="M67 5.5h5 M134 5.5h6 M137 2.5v6"/></g><line x1="75" y1="5.5" x2="131" y2="5.5" stroke="#c0c0c0"/><rect x="103" y="3.5" width="1.5" height="4" fill="#999"/></svg>
<div class="t" style="left:920.00px;top:536.50px;line-height:20px;font-size:7.8px;color:#a0a0a0;">100%</div>
<div style="left:80.00px;top:553.00px;width:864.00px;height:23.00px;background:linear-gradient(90deg,#1f3744 0%,#1e3442 30%,#1c2e3e 65%,#1a2a45 100%)"></div>
<div style="left:80.00px;top:553.00px;width:864.00px;height:1.00px;background:#3d4f5a"></div>
<svg style="position:absolute;left:88px;top:558px" width="14" height="14"><g fill="#fff"><rect x="1" y="1.8" width="5.6" height="5"/><rect x="7.4" y="1" width="6" height="5.8"/><rect x="1" y="7.6" width="5.6" height="5"/><rect x="7.4" y="7.6" width="6" height="5.8"/></g></svg>
<div style="left:108.00px;top:553.50px;width:196.60px;height:22.50px;background:#f2f2f2"></div>
<svg style="position:absolute;left:114px;top:558px" width="14" height="14"><circle cx="8" cy="5.5" r="3.6" fill="none" stroke="#333" stroke-width="1.1"/><line x1="5.3" y1="8.2" x2="1.8" y2="11.8" stroke="#333" stroke-width="1.3"/></svg>
<div class="t j" style="left:131.00px;width:65.50px;top:554.50px;line-height:20px;font-size:7.4px;color:#3a3a3a;">ここに入力して検索</div>
<svg style="position:absolute;left:0;top:0" width="1024" height="576"><circle cx="319" cy="564.5" r="4.1" fill="none" stroke="#d0dae0" stroke-width="1.3"/><g fill="none" stroke="#c8c8c8" stroke-width="1"><rect x="342.5" y="561.5" width="6" height="6"/><path d="M341 559.5h9M341 569.5h9M351.5 559.5v10"/></g><rect x="368" y="559" width="14" height="11" fill="#f4c14f"/><rect x="368" y="557.5" width="6" height="3" fill="#e3ab3c"/><rect x="371" y="564" width="8" height="4" fill="#3a7dc9"/><rect x="394" y="558" width="14" height="13" fill="#2c6fc2"/><path d="M394 571 l5 -6 l4 4 l2 -2 l3 4z" fill="#8cc8ff"/><circle cx="404" cy="561" r="1.3" fill="#fff"/><rect x="420" y="560" width="14" height="11" fill="#fff"/><path d="M424 560 v-2.5 h6 v2.5" stroke="#fff" fill="none" stroke-width="1.2"/><rect x="424" y="563" width="3" height="3" fill="#f25022"/><rect x="428" y="563" width="3" height="3" fill="#7fba00"/><rect x="424" y="567" width="3" height="3" fill="#00a4ef"/><rect x="428" y="567" width="3" height="3" fill="#ffb900"/><circle cx="453" cy="564.5" r="7" fill="#1f8ad8"/><circle cx="455" cy="566" r="3.3" fill="#173a66"/><path d="M446.5 562.5 q4 -7.5 12.5 -2.5" stroke="#5fd36e" stroke-width="2.2" fill="none"/><path d="M474 570 l3 -12 h8 l-2 12z" fill="#b7d3e6"/><path d="M474 570.5 h9" stroke="#fff"/><circle cx="504.5" cy="564.5" r="6.5" fill="#ffe600"/><rect x="494" y="574.5" width="21" height="1.5" fill="#9ec6e6"/><path d="M524 558 l5 4 l5 -4 l-1 6 l2 6 l-6 -3 l-5 3 l1 -6z" fill="#b7c9dd"/><path d="M530 562 l5 7 h-2 l1 3z" fill="#fff"/><rect x="548" y="558" width="15" height="12" fill="#2f8fe0"/><path d="M548 558 l7.5 6 l7.5 -6" fill="#7cc2ff"/><rect x="576" y="557" width="14" height="14" fill="#2b3a45"/><path d="M579 567 l7 -6 l2 3 l-7 5z" fill="#2cc3a6"/><circle cx="580" cy="560" r="1.5" fill="#fff"/><rect x="596" y="553" width="24" height="23" fill="#3b4955"/><rect x="600" y="558" width="16" height="12" rx="1" fill="#21a366"/><rect x="600" y="558" width="9" height="12" fill="#107c41"/><text x="602" y="567" font-size="7" fill="#fff" font-family="Liberation Sans">x</text><rect x="597" y="574.5" width="22" height="1.5" fill="#9ec6e6"/><rect x="625" y="559" width="12" height="9" rx="2" fill="#39a8d8"/><path d="M637 561 l4 -2 v8 l-4 -2z" fill="#39a8d8"/><circle cx="631" cy="563.5" r="2.2" fill="#e53935"/><path d="M631 568 v3 M628 571h6" stroke="#39a8d8"/><rect x="622" y="574.5" width="21" height="1.5" fill="#9ec6e6"/><circle cx="667" cy="564" r="5.5" fill="#f6c343"/><path d="M664 569.5 q0 -4 4 -4 q3 0 4 2 q3 0 3 2z" fill="#a9cdea"/><path d="M708 566 l4 -4 l4 4" fill="none" stroke="#ddd" stroke-width="1"/><path d="M726 562.5 h2 l3 -3 v10 l-3 -3 h-2z" fill="none" stroke="#ddd" stroke-width=".9"/><path d="M733 562 q1.5 2.5 0 5" fill="none" stroke="#ddd" stroke-width=".9"/><rect x="942" y="553" width="2" height="23" fill="#2a3a48"/></svg>
<div class="t" style="left:679.00px;top:555.00px;line-height:20px;font-size:8.1px;color:#fff;">33°C</div>
<div class="t" style="left:741.00px;top:553.60px;line-height:20px;font-size:13.6px;color:#ececec;text-shadow:0 0 1.5px #000;letter-spacing:-0.25px">©2021 saym.</div>
<svg style="position:absolute;left:819px;top:558px" width="12" height="12"><path d="M2 10 l6 -7 l2 2 l-6 7z" fill="none" stroke="#ccc" stroke-width=".9"/></svg>
<div class="t" style="left:839.00px;top:555.00px;line-height:20px;font-size:9.5px;color:#fff;font-family:'Liberation Serif'">A</div>
<svg style="position:absolute;left:850px;top:557px" width="16" height="16"><circle cx="8" cy="7.5" r="5" fill="#1a6fd4"/><circle cx="11.5" cy="11" r="2.5" fill="#f0a020"/><circle cx="10" cy="12" r="1.5" fill="#e04040"/></svg>
<div class="t" style="left:742.00px;width:300px;text-align:center;top:549.40px;line-height:20px;font-size:7px;color:#fff;">11:56</div>
<div class="t" style="left:741.50px;width:300px;text-align:center;top:560.00px;line-height:20px;font-size:7.1px;color:#fff;">2021/08/05</div>
<svg style="position:absolute;left:918px;top:557px" width="14" height="14"><path d="M2 2h10v8h-4l-2 2v-2h-4z" fill="#fff"/><path d="M4 5h6M4 7h6" stroke="#333" stroke-width=".8"/></svg>
</body></html>
